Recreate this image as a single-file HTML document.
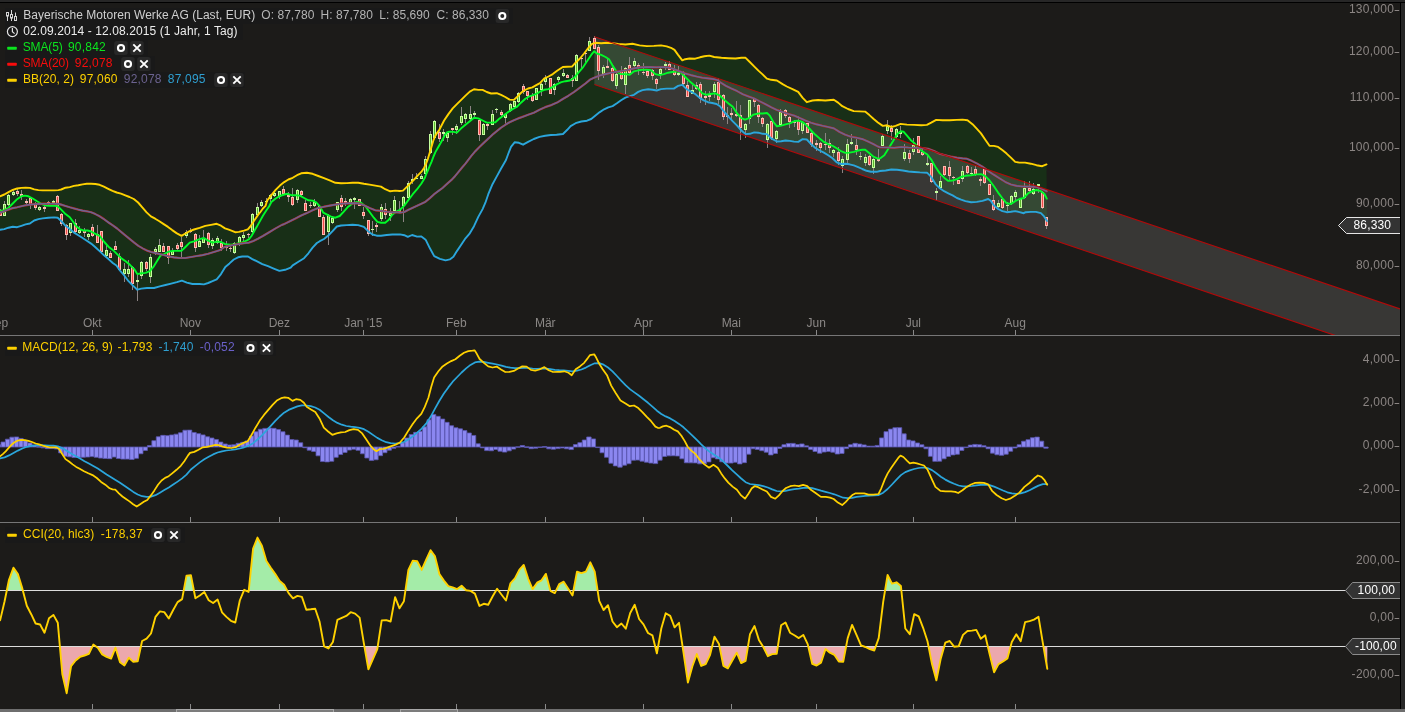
<!DOCTYPE html>
<html lang="de"><head><meta charset="utf-8"><title>Bayerische Motoren Werke AG Chart</title>
<style>
html,body{margin:0;padding:0;background:#1c1b19;}
body{width:1405px;height:712px;overflow:hidden;position:relative;font-family:"Liberation Sans",Arial,sans-serif;font-size:12px;}
.abs{position:absolute;}
#chart{position:absolute;left:0;top:0;}
.mon{position:absolute;top:315px;width:60px;text-align:center;color:#8b8886;font-size:12px;line-height:16px;white-space:nowrap;}
.yl{position:absolute;right:10.8px;letter-spacing:0.27px;width:80px;text-align:right;color:#8b8583;font-size:12px;line-height:16px;white-space:nowrap;}
.tagt{position:absolute;letter-spacing:0.15px;color:#fff;font-size:12px;line-height:16px;white-space:nowrap;}
.lt{position:absolute;font-size:12px;line-height:16px;white-space:nowrap;margin-top:-1px;letter-spacing:0.04px;}
#txt{position:absolute;left:0;top:0;width:1405px;height:712px;will-change:transform;}
#topbar{position:absolute;left:0;top:0;width:1405px;height:2px;background:#272727;}
#topline{position:absolute;left:0;top:2px;width:1405px;height:1px;background:#000;}
#rightline{position:absolute;left:1400px;top:2px;width:1px;height:707px;background:#000;}
#rightbar{position:absolute;left:1401px;top:0;width:4px;height:712px;background:#272727;}
#botbar{position:absolute;left:0;top:709px;width:1405px;height:3px;background:#6e6e6e;}
.sb{position:absolute;top:709px;height:3px;box-sizing:border-box;border:1px solid #a8a8a8;border-bottom:none;background:#7c7c7c;}
</style></head><body>
<svg id="chart" width="1405" height="712" viewBox="0 0 1405 712">
<defs><clipPath id="cm"><rect x="0" y="3" width="1400" height="332"/></clipPath></defs>
<g clip-path="url(#cm)">
<path d="M0.0 196.3 L4.3 194.5 L8.5 192.1 L12.8 189.9 L17.1 188.5 L21.4 187.9 L25.6 187.8 L29.9 187.9 L34.2 189.4 L38.4 190.1 L42.7 190.4 L48.4 190.4 L54.1 190.4 L58.4 190.1 L61.2 189.5 L65.5 187.7 L69.8 187.1 L74.0 185.9 L78.3 185.2 L82.6 184.4 L86.8 183.8 L91.1 183.7 L95.4 184.0 L99.6 184.8 L103.9 186.7 L108.2 188.8 L112.5 190.9 L116.7 192.5 L121.0 193.6 L125.3 195.3 L129.5 197.0 L133.8 199.0 L138.1 202.5 L142.3 207.3 L146.6 212.4 L150.9 216.4 L155.2 218.7 L159.4 221.2 L163.7 224.1 L168.0 226.9 L172.2 230.1 L176.5 233.1 L181.5 235.9 L185.4 233.5 L189.7 231.1 L194.0 229.5 L199.6 227.8 L205.3 225.9 L211.0 224.9 L216.7 223.8 L221.0 225.7 L225.0 228.4 L228.8 229.7 L232.0 230.9 L235.1 232.2 L238.9 231.9 L244.0 230.6 L247.8 229.3 L250.3 226.5 L252.8 222.7 L255.3 218.9 L257.9 215.1 L260.4 212.0 L262.9 208.5 L265.5 205.9 L267.1 200.6 L271.4 195.2 L275.6 189.9 L279.9 185.6 L284.2 182.1 L288.4 179.5 L292.7 177.8 L297.0 175.2 L301.2 173.3 L306.9 172.8 L312.6 173.8 L318.3 176.0 L324.0 178.1 L329.7 180.4 L335.4 182.8 L341.1 183.2 L346.8 183.1 L352.5 182.8 L358.2 182.8 L363.9 183.8 L369.6 184.6 L375.3 185.6 L381.0 186.6 L385.2 189.2 L390.2 191.3 L395.2 190.6 L399.5 191.0 L403.0 190.6 L406.6 187.1 L410.9 182.8 L415.1 178.5 L418.3 174.9 L421.5 171.7 L424.0 167.9 L425.9 164.1 L427.8 159.1 L429.7 152.8 L431.6 146.4 L433.5 140.1 L435.4 135.7 L437.3 132.5 L439.2 130.0 L444.1 120.5 L448.4 114.1 L452.7 108.4 L456.9 104.1 L461.2 99.9 L465.5 95.6 L469.8 91.6 L474.0 89.2 L478.3 89.9 L482.6 89.9 L486.8 92.0 L491.1 93.5 L496.8 93.2 L501.1 94.9 L505.3 97.0 L509.6 99.6 L513.9 99.9 L516.7 97.3 L520.3 93.5 L523.8 90.6 L528.1 88.5 L532.4 87.3 L536.7 84.9 L540.0 83.1 L544.3 78.4 L548.5 76.5 L552.8 74.1 L557.1 70.8 L562.8 67.0 L567.0 66.7 L572.0 66.6 L575.6 62.7 L579.9 58.5 L584.1 53.5 L588.4 47.8 L592.0 43.8 L595.5 42.8 L601.2 43.2 L606.9 42.8 L612.6 43.1 L618.3 43.9 L625.4 44.5 L632.5 43.8 L639.6 45.4 L646.8 46.1 L653.9 45.9 L661.0 45.4 L666.7 46.4 L671.0 47.8 L674.5 49.9 L678.1 54.9 L682.3 60.3 L685.2 59.2 L689.5 58.5 L695.2 58.7 L700.0 57.3 L704.3 56.3 L709.3 55.6 L714.2 57.0 L721.4 57.8 L728.5 58.2 L735.6 58.5 L741.3 57.8 L745.6 57.8 L749.8 62.0 L754.1 66.3 L758.4 70.6 L762.6 74.4 L766.9 78.7 L771.2 79.8 L776.9 80.5 L782.6 84.1 L786.8 86.5 L792.5 89.1 L798.2 91.9 L802.5 97.6 L806.8 102.2 L812.5 100.5 L818.1 100.0 L825.3 100.5 L833.8 99.8 L838.1 102.6 L842.3 106.2 L848.0 109.0 L853.7 111.1 L859.4 111.4 L865.1 111.6 L869.4 115.1 L873.7 119.0 L877.9 122.5 L882.8 125.9 L887.0 125.3 L891.3 127.0 L895.6 125.9 L900.6 123.9 L907.0 124.6 L914.1 124.9 L921.2 125.2 L926.9 124.9 L931.2 122.7 L936.2 119.9 L942.6 120.2 L949.7 120.3 L956.8 119.9 L962.5 119.6 L967.5 120.2 L972.5 124.2 L976.7 128.7 L981.0 133.4 L985.3 139.8 L989.5 145.8 L993.8 145.9 L998.1 146.9 L1002.3 150.1 L1006.6 153.6 L1010.9 157.6 L1015.2 161.9 L1019.4 162.6 L1025.1 162.6 L1030.8 163.7 L1036.5 165.2 L1042.2 166.2 L1046.5 164.4 L1047.0 221.0 L1044.1 216.4 L1040.9 213.2 L1035.9 211.9 L1030.8 211.9 L1025.7 212.2 L1023.8 213.2 L1019.5 212.2 L1015.2 211.1 L1011.0 211.8 L1006.7 212.2 L1002.4 211.1 L998.1 209.0 L993.9 205.4 L991.0 201.1 L988.2 199.0 L982.5 200.9 L976.8 201.9 L971.1 202.3 L965.4 201.1 L961.1 199.7 L956.9 198.0 L952.6 195.4 L948.3 193.3 L944.1 191.2 L939.8 188.3 L935.5 184.1 L931.2 176.9 L927.0 172.7 L919.9 172.4 L914.2 172.0 L908.5 171.5 L902.8 170.5 L897.1 169.8 L891.4 169.5 L885.7 170.5 L880.0 171.0 L876.6 171.8 L870.9 171.8 L866.6 170.8 L862.3 169.0 L858.1 167.1 L853.8 165.4 L849.5 164.3 L845.3 163.7 L841.0 164.0 L836.7 162.3 L832.5 158.3 L828.2 155.2 L823.9 152.6 L819.6 150.5 L815.4 148.0 L811.1 144.1 L806.8 139.5 L802.6 139.1 L798.3 141.9 L794.0 141.6 L789.8 140.9 L785.5 140.5 L781.2 141.2 L776.9 141.5 L771.2 138.4 L767.0 134.1 L762.7 133.8 L758.4 132.7 L754.2 132.4 L749.9 133.8 L745.6 134.1 L741.4 130.5 L737.1 125.6 L732.8 121.3 L728.5 116.7 L724.3 112.0 L720.0 106.3 L716.5 104.0 L712.2 103.0 L708.0 102.2 L703.7 100.4 L699.4 97.6 L695.2 94.0 L690.9 91.6 L686.6 89.1 L682.3 84.8 L678.1 85.9 L673.8 88.6 L666.7 88.6 L661.0 89.1 L656.7 90.5 L652.5 89.8 L648.2 89.3 L642.5 90.1 L638.2 91.9 L634.0 94.8 L629.7 96.2 L625.4 97.6 L621.1 100.2 L616.9 103.3 L612.6 106.1 L608.3 107.3 L604.1 109.3 L599.8 112.1 L595.5 115.4 L591.2 119.0 L587.0 120.7 L581.3 121.5 L575.6 123.2 L570.6 126.1 L567.3 129.8 L563.0 134.0 L556.6 134.7 L550.9 135.0 L545.2 135.7 L539.5 136.9 L533.8 139.0 L528.1 141.9 L523.1 144.7 L518.9 142.8 L514.6 142.3 L511.0 146.8 L508.2 154.0 L506.0 160.0 L501.1 168.5 L496.8 176.4 L492.5 184.2 L488.3 194.2 L485.4 202.7 L482.6 209.1 L478.3 216.9 L474.0 226.2 L469.8 233.3 L465.5 238.3 L461.2 244.7 L456.9 251.1 L453.4 256.8 L449.8 259.4 L445.6 260.4 L439.9 258.9 L434.2 256.1 L429.9 248.3 L425.6 239.7 L421.4 236.4 L417.1 236.6 L412.1 235.0 L407.8 236.9 L404.3 235.2 L400.0 234.4 L398.0 234.5 L392.3 234.5 L386.7 235.0 L381.0 235.7 L376.7 235.7 L372.4 234.5 L368.1 231.2 L363.9 226.9 L358.2 225.1 L352.5 224.8 L346.8 225.1 L341.1 225.5 L336.8 226.5 L332.6 231.2 L328.3 235.5 L324.0 239.0 L319.8 241.2 L316.9 243.0 L312.6 247.6 L308.4 253.3 L304.1 258.2 L298.4 261.8 L292.7 265.4 L290.7 267.7 L285.1 269.8 L279.4 270.9 L273.7 268.6 L268.0 266.2 L262.3 264.1 L256.6 261.2 L252.3 259.1 L248.0 256.5 L242.3 256.5 L238.1 257.3 L233.8 259.5 L229.5 263.4 L225.3 266.9 L221.0 274.1 L216.7 279.3 L212.5 281.2 L208.2 283.0 L203.9 284.4 L199.6 284.0 L192.5 284.0 L186.8 282.6 L181.9 280.7 L176.9 282.2 L171.2 283.6 L165.5 285.0 L159.8 286.4 L154.1 288.0 L147.0 288.0 L141.3 288.6 L137.3 289.7 L132.7 285.4 L128.5 281.2 L124.2 275.5 L119.9 270.5 L116.4 265.5 L112.8 263.0 L108.5 259.1 L104.3 255.6 L99.6 251.1 L95.4 247.2 L91.1 243.6 L86.8 240.7 L82.6 238.0 L78.3 235.2 L74.0 232.6 L69.8 229.1 L65.5 225.8 L61.2 221.0 L57.7 217.8 L54.1 217.4 L48.4 217.7 L42.7 218.4 L38.4 219.1 L34.2 220.5 L29.9 223.5 L25.6 224.4 L21.4 225.8 L17.1 227.2 L12.8 226.7 L8.5 227.7 L4.3 229.1 L0.0 229.8 Z" fill="#182f17"/>
<path d="M594.4 36.7 L1400 308.9 L1400 357.4 L594.4 84.5 Z" fill="rgba(255,255,255,0.125)"/>
<path d="M0.5 209 V216M4.5 201 V216M8.5 194 V206M13.5 189 V196M17.5 189 V196M21.5 190 V200M26.5 199 V204M30.5 198 V209M35.5 202 V210M39.5 206 V211M44.5 206 V212M48.5 201 V206M53.5 200 V203M57.5 195 V211M61.5 213 V226M66.5 224 V240M70.5 223 V236M75.5 219 V233M79.5 226 V234M84.5 228 V237M88.5 233 V240M92.5 224 V237M97.5 225 V243M101.5 231 V253M106.5 245 V257M110.5 251 V258M115.5 241 V250M119.5 253 V271M124.5 263 V282M128.5 260 V277M132.5 266 V290M137.5 273 V301M141.5 261 V279M146.5 261 V271M150.5 254 V283M155.5 247 V255M159.5 239 V252M163.5 243 V252M168.5 246 V264M172.5 248 V255M177.5 243 V250M181.5 237 V257M186.5 230 V238M190.5 228 V233M195.5 233 V252M199.5 235 V247M203.5 230 V243M208.5 232 V248M212.5 238 V249M217.5 236 V244M221.5 239 V251M226.5 241 V251M230.5 244 V252M234.5 242 V254M239.5 236 V246M243.5 232 V241M248.5 233 V238M252.5 213 V233M257.5 203 V216M261.5 200 V207M266.5 198 V202M270.5 194 V202M274.5 191 V197M279.5 191 V199M283.5 186 V194M288.5 192 V202M292.5 188 V206M297.5 189 V203M301.5 190 V196M305.5 200 V211M310.5 202 V208M314.5 199 V207M319.5 205 V217M323.5 215 V235M328.5 214 V245M332.5 216 V224M337.5 202 V212M341.5 195 V211M345.5 198 V206M350.5 198 V203M354.5 197 V209M359.5 199 V206M363.5 207 V219M368.5 220 V236M372.5 221 V236M376.5 223 V232M381.5 204 V221M385.5 203 V219M390.5 208 V221M394.5 196 V211M399.5 201 V212M403.5 196 V222M408.5 181 V199M412.5 174 V184M416.5 173 V179M421.5 174 V179M425.5 156 V174M430.5 131 V154M434.5 120 V138M439.5 124 V142M443.5 129 V141M447.5 132 V142M452.5 128 V135M456.5 124 V134M461.5 107 V125M465.5 113 V123M470.5 106 V120M474.5 111 V117M479.5 120 V141M483.5 123 V135M487.5 123 V130M492.5 110 V125M496.5 108 V113M501.5 110 V116M505.5 113 V125M510.5 103 V112M514.5 101 V108M518.5 92 V103M523.5 84 V94M527.5 91 V100M532.5 93 V102M536.5 88 V100M541.5 83 V96M545.5 75 V85M550.5 78 V94M554.5 83 V95M558.5 76 V82M563.5 69 V77M567.5 74 V78M572.5 75 V87M576.5 54 V81M581.5 56 V68M585.5 51 V63M589.5 37 V51M594.5 36 V49M598.5 45 V80M603.5 65 V78M607.5 58 V68M612.5 67 V82M616.5 73 V89M621.5 66 V80M625.5 67 V94M629.5 57 V74M634.5 58 V67M638.5 63 V75M643.5 63 V75M647.5 70 V78M652.5 69 V80M656.5 78 V89M660.5 68 V79M665.5 62 V70M669.5 61 V70M674.5 65 V76M678.5 66 V76M683.5 71 V85M687.5 81 V97M692.5 85 V94M696.5 82 V90M700.5 82 V103M705.5 91 V105M709.5 91 V101M714.5 82 V98M718.5 78 V104M723.5 94 V120M727.5 107 V124M731.5 108 V119M736.5 101 V117M740.5 105 V140M745.5 123 V138M749.5 100 V124M754.5 99 V107M758.5 104 V123M762.5 117 V127M767.5 123 V148M771.5 121 V140M776.5 130 V143M780.5 109 V126M785.5 109 V118M789.5 116 V128M794.5 120 V127M798.5 116 V135M802.5 121 V134M807.5 123 V133M811.5 132 V147M816.5 140 V151M820.5 142 V153M825.5 133 V150M829.5 139 V153M833.5 149 V157M838.5 147 V165M842.5 156 V173M847.5 139 V163M851.5 134 V145M856.5 139 V155M860.5 152 V160M865.5 154 V166M869.5 155 V166M873.5 158 V174M878.5 149 V162M882.5 134 V146M887.5 120 V134M891.5 125 V140M896.5 128 V139M900.5 126 V138M904.5 144 V161M909.5 150 V163M913.5 138 V155M918.5 136 V153M922.5 149 V156M927.5 156 V166M931.5 163 V183M936.5 188 V200M940.5 176 V188M944.5 166 V176M949.5 161 V180M953.5 176 V185M958.5 180 V184M962.5 166 V182M967.5 165 V174M971.5 167 V175M975.5 166 V176M980.5 177 V186M984.5 168 V184M989.5 184 V195M993.5 195 V211M998.5 200 V208M1002.5 198 V209M1007.5 202 V211M1011.5 195 V205M1015.5 190 V200M1020.5 198 V208M1024.5 181 V199M1029.5 181 V192M1033.5 183 V195M1038.5 184 V193M1042.5 191 V209M1046.5 217 V229" stroke="#8c8484" stroke-width="1" fill="none"/>
<path d="M3 204h3v12h-3zM7 195h3v10h-3zM12 192h3v3h-3zM38 207h3v3h-3zM52 201h3v2h-3zM69 223h3v10h-3zM78 230h3v3h-3zM87 234h3v3h-3zM105 250h3v6h-3zM123 269h3v5h-3zM127 269h3v5h-3zM136 280h3v2h-3zM140 262h3v14h-3zM149 257h3v20h-3zM154 249h3v3h-3zM158 245h3v7h-3zM171 251h3v4h-3zM185 232h3v4h-3zM198 241h3v6h-3zM202 238h3v5h-3zM211 240h3v6h-3zM216 238h3v5h-3zM233 243h3v10h-3zM238 237h3v6h-3zM242 235h3v3h-3zM251 214h3v18h-3zM256 207h3v8h-3zM260 202h3v4h-3zM265 201h3v1h-3zM269 195h3v4h-3zM273 193h3v3h-3zM278 191h3v6h-3zM296 190h3v10h-3zM313 202h3v4h-3zM327 215h3v17h-3zM331 218h3v5h-3zM336 202h3v8h-3zM349 199h3v4h-3zM353 198h3v2h-3zM371 229h3v1h-3zM380 207h3v12h-3zM389 213h3v3h-3zM393 200h3v11h-3zM402 197h3v9h-3zM407 183h3v15h-3zM411 179h3v2h-3zM415 178h3v1h-3zM420 176h3v3h-3zM424 159h3v15h-3zM429 134h3v19h-3zM433 121h3v17h-3zM442 132h3v2h-3zM446 133h3v5h-3zM455 126h3v4h-3zM460 116h3v7h-3zM464 114h3v5h-3zM469 114h3v5h-3zM473 113h3v2h-3zM482 124h3v11h-3zM491 114h3v11h-3zM495 109h3v1h-3zM504 114h3v4h-3zM509 104h3v7h-3zM513 101h3v6h-3zM517 93h3v9h-3zM535 88h3v12h-3zM540 84h3v6h-3zM544 78h3v4h-3zM553 84h3v6h-3zM557 77h3v3h-3zM562 73h3v3h-3zM575 55h3v26h-3zM588 41h3v10h-3zM602 67h3v7h-3zM615 74h3v12h-3zM624 68h3v17h-3zM633 61h3v5h-3zM659 69h3v5h-3zM664 64h3v2h-3zM677 73h3v2h-3zM691 90h3v4h-3zM713 84h3v8h-3zM744 124h3v6h-3zM748 100h3v19h-3zM766 124h3v16h-3zM775 131h3v8h-3zM779 112h3v13h-3zM801 122h3v9h-3zM832 150h3v3h-3zM841 159h3v7h-3zM846 144h3v16h-3zM850 142h3v2h-3zM859 156h3v1h-3zM864 157h3v6h-3zM872 159h3v9h-3zM881 136h3v10h-3zM886 126h3v5h-3zM895 129h3v8h-3zM899 131h3v3h-3zM903 152h3v7h-3zM912 145h3v7h-3zM926 163h3v2h-3zM935 191h3v2h-3zM939 181h3v7h-3zM961 171h3v8h-3zM970 173h3v1h-3zM997 203h3v4h-3zM1006 205h3v1h-3zM1010 196h3v8h-3zM1014 192h3v5h-3zM1019 199h3v9h-3zM1023 188h3v10h-3zM1032 189h3v5h-3zM1037 184h3v2h-3z" fill="#c6ff9e"/>
<path d="M4 205h1v10h-1zM8 196h1v8h-1zM13 193h1v1h-1zM39 208h1v1h-1zM70 224h1v8h-1zM79 231h1v1h-1zM88 235h1v1h-1zM106 251h1v4h-1zM124 270h1v3h-1zM128 270h1v3h-1zM141 263h1v12h-1zM150 258h1v18h-1zM155 250h1v1h-1zM159 246h1v5h-1zM172 252h1v2h-1zM186 233h1v2h-1zM199 242h1v4h-1zM203 239h1v3h-1zM212 241h1v4h-1zM217 239h1v3h-1zM234 244h1v8h-1zM239 238h1v4h-1zM243 236h1v1h-1zM252 215h1v16h-1zM257 208h1v6h-1zM261 203h1v2h-1zM270 196h1v2h-1zM274 194h1v1h-1zM279 192h1v4h-1zM297 191h1v8h-1zM314 203h1v2h-1zM328 216h1v15h-1zM332 219h1v3h-1zM337 203h1v6h-1zM350 200h1v2h-1zM381 208h1v10h-1zM390 214h1v1h-1zM394 201h1v9h-1zM403 198h1v7h-1zM408 184h1v13h-1zM421 177h1v1h-1zM425 160h1v13h-1zM430 135h1v17h-1zM434 122h1v15h-1zM447 134h1v3h-1zM456 127h1v2h-1zM461 117h1v5h-1zM465 115h1v3h-1zM470 115h1v3h-1zM483 125h1v9h-1zM492 115h1v9h-1zM505 115h1v2h-1zM510 105h1v5h-1zM514 102h1v4h-1zM518 94h1v7h-1zM536 89h1v10h-1zM541 85h1v4h-1zM545 79h1v2h-1zM554 85h1v4h-1zM558 78h1v1h-1zM563 74h1v1h-1zM576 56h1v24h-1zM589 42h1v8h-1zM603 68h1v5h-1zM616 75h1v10h-1zM625 69h1v15h-1zM634 62h1v3h-1zM660 70h1v3h-1zM692 91h1v2h-1zM714 85h1v6h-1zM745 125h1v4h-1zM749 101h1v17h-1zM767 125h1v14h-1zM776 132h1v6h-1zM780 113h1v11h-1zM802 123h1v7h-1zM833 151h1v1h-1zM842 160h1v5h-1zM847 145h1v14h-1zM865 158h1v4h-1zM873 160h1v7h-1zM882 137h1v8h-1zM887 127h1v3h-1zM896 130h1v6h-1zM900 132h1v1h-1zM904 153h1v5h-1zM913 146h1v5h-1zM940 182h1v5h-1zM962 172h1v6h-1zM998 204h1v2h-1zM1011 197h1v6h-1zM1015 193h1v3h-1zM1020 200h1v7h-1zM1024 189h1v8h-1zM1033 190h1v3h-1z" fill="#58b62c"/>
<path d="M-1 210h3v6h-3zM16 191h3v3h-3zM20 194h3v2h-3zM25 201h3v2h-3zM29 198h3v7h-3zM34 203h3v5h-3zM43 207h3v2h-3zM47 202h3v1h-3zM56 196h3v15h-3zM60 214h3v10h-3zM65 225h3v10h-3zM74 223h3v9h-3zM83 230h3v3h-3zM91 227h3v9h-3zM96 234h3v9h-3zM100 231h3v21h-3zM109 253h3v5h-3zM114 246h3v4h-3zM118 256h3v14h-3zM131 267h3v17h-3zM145 262h3v7h-3zM162 246h3v6h-3zM167 246h3v12h-3zM176 245h3v4h-3zM180 242h3v5h-3zM189 231h3v1h-3zM194 234h3v14h-3zM207 233h3v12h-3zM220 243h3v5h-3zM225 246h3v2h-3zM229 248h3v1h-3zM247 234h3v1h-3zM282 189h3v5h-3zM287 195h3v2h-3zM291 197h3v8h-3zM300 191h3v4h-3zM304 203h3v8h-3zM309 205h3v1h-3zM318 206h3v11h-3zM322 217h3v18h-3zM340 198h3v9h-3zM344 201h3v2h-3zM358 199h3v7h-3zM362 212h3v4h-3zM367 220h3v14h-3zM375 225h3v2h-3zM384 209h3v6h-3zM398 210h3v2h-3zM438 132h3v7h-3zM451 128h3v2h-3zM478 120h3v15h-3zM486 124h3v2h-3zM500 112h3v3h-3zM522 86h3v6h-3zM526 91h3v5h-3zM531 95h3v6h-3zM549 78h3v16h-3zM566 75h3v3h-3zM571 78h3v3h-3zM580 58h3v1h-3zM584 53h3v1h-3zM593 38h3v11h-3zM597 47h3v24h-3zM606 66h3v2h-3zM611 68h3v13h-3zM620 71h3v8h-3zM628 65h3v8h-3zM637 65h3v3h-3zM642 72h3v1h-3zM646 71h3v5h-3zM651 70h3v6h-3zM655 79h3v5h-3zM668 64h3v6h-3zM673 70h3v5h-3zM682 74h3v10h-3zM686 85h3v12h-3zM695 85h3v4h-3zM699 84h3v15h-3zM704 96h3v2h-3zM708 95h3v2h-3zM717 82h3v18h-3zM722 95h3v22h-3zM726 115h3v2h-3zM730 113h3v2h-3zM735 114h3v2h-3zM739 115h3v13h-3zM753 99h3v3h-3zM757 105h3v12h-3zM761 118h3v6h-3zM770 121h3v17h-3zM784 110h3v6h-3zM788 117h3v5h-3zM793 121h3v2h-3zM797 120h3v10h-3zM806 123h3v10h-3zM810 133h3v12h-3zM815 143h3v2h-3zM819 143h3v5h-3zM824 144h3v1h-3zM828 143h3v5h-3zM837 152h3v9h-3zM855 145h3v5h-3zM868 156h3v9h-3zM877 159h3v2h-3zM890 128h3v4h-3zM908 153h3v6h-3zM917 136h3v17h-3zM921 152h3v3h-3zM930 163h3v19h-3zM943 166h3v9h-3zM948 167h3v9h-3zM952 177h3v1h-3zM957 180h3v4h-3zM966 166h3v7h-3zM974 169h3v6h-3zM979 179h3v2h-3zM983 169h3v14h-3zM988 184h3v11h-3zM992 200h3v10h-3zM1001 199h3v9h-3zM1028 188h3v3h-3zM1041 192h3v16h-3zM1045 217h3v9h-3z" fill="#ffb9b0"/>
<path d="M0 211h1v4h-1zM17 192h1v1h-1zM30 199h1v5h-1zM35 204h1v3h-1zM57 197h1v13h-1zM61 215h1v8h-1zM66 226h1v8h-1zM75 224h1v7h-1zM84 231h1v1h-1zM92 228h1v7h-1zM97 235h1v7h-1zM101 232h1v19h-1zM110 254h1v3h-1zM115 247h1v2h-1zM119 257h1v12h-1zM132 268h1v15h-1zM146 263h1v5h-1zM163 247h1v4h-1zM168 247h1v10h-1zM177 246h1v2h-1zM181 243h1v3h-1zM195 235h1v12h-1zM208 234h1v10h-1zM221 244h1v3h-1zM283 190h1v3h-1zM292 198h1v6h-1zM301 192h1v2h-1zM305 204h1v6h-1zM319 207h1v9h-1zM323 218h1v16h-1zM341 199h1v7h-1zM359 200h1v5h-1zM363 213h1v2h-1zM368 221h1v12h-1zM385 210h1v4h-1zM439 133h1v5h-1zM479 121h1v13h-1zM501 113h1v1h-1zM523 87h1v4h-1zM527 92h1v3h-1zM532 96h1v4h-1zM550 79h1v14h-1zM567 76h1v1h-1zM572 79h1v1h-1zM594 39h1v9h-1zM598 48h1v22h-1zM612 69h1v11h-1zM621 72h1v6h-1zM629 66h1v6h-1zM638 66h1v1h-1zM647 72h1v3h-1zM652 71h1v4h-1zM656 80h1v3h-1zM669 65h1v4h-1zM674 71h1v3h-1zM683 75h1v8h-1zM687 86h1v10h-1zM696 86h1v2h-1zM700 85h1v13h-1zM718 83h1v16h-1zM723 96h1v20h-1zM740 116h1v11h-1zM754 100h1v1h-1zM758 106h1v10h-1zM762 119h1v4h-1zM771 122h1v15h-1zM785 111h1v4h-1zM789 118h1v3h-1zM798 121h1v8h-1zM807 124h1v8h-1zM811 134h1v10h-1zM820 144h1v3h-1zM829 144h1v3h-1zM838 153h1v7h-1zM856 146h1v3h-1zM869 157h1v7h-1zM891 129h1v2h-1zM909 154h1v4h-1zM918 137h1v15h-1zM922 153h1v1h-1zM931 164h1v17h-1zM944 167h1v7h-1zM949 168h1v7h-1zM958 181h1v2h-1zM967 167h1v5h-1zM975 170h1v4h-1zM984 170h1v12h-1zM989 185h1v9h-1zM993 201h1v8h-1zM1002 200h1v7h-1zM1029 189h1v1h-1zM1042 193h1v14h-1zM1046 218h1v7h-1z" fill="#f04a4a"/>
<path d="M0.0 211.0 L4.3 210.1 L8.5 207.7 L12.8 203.5 L17.1 199.2 L21.4 196.3 L24.9 195.6 L28.5 196.3 L32.7 198.5 L37.0 201.3 L41.3 203.9 L45.6 205.6 L49.8 205.9 L54.1 205.6 L57.7 206.3 L61.2 209.6 L65.5 214.1 L69.8 217.3 L73.3 222.0 L76.2 226.2 L79.7 229.1 L83.3 230.5 L87.5 230.5 L91.1 231.5 L95.4 233.8 L99.6 235.8 L104.3 242.0 L108.5 246.7 L112.8 249.9 L117.1 254.1 L121.4 258.4 L125.6 261.2 L129.9 264.8 L134.2 269.1 L137.3 274.1 L141.3 273.3 L145.6 272.9 L149.8 271.2 L153.4 266.9 L156.9 261.2 L160.5 255.6 L164.1 254.1 L168.3 251.7 L172.6 250.9 L176.9 250.9 L181.4 250.9 L185.4 247.0 L189.7 242.7 L194.0 241.3 L199.6 239.2 L203.9 238.0 L208.2 240.6 L212.5 242.7 L216.7 241.6 L221.0 242.0 L225.3 244.2 L231.0 244.6 L235.2 244.2 L239.5 243.0 L242.1 242.3 L245.9 241.0 L249.0 239.1 L251.5 236.0 L253.4 232.8 L254.7 230.3 L256.6 227.1 L259.8 221.4 L262.9 215.7 L266.1 210.7 L269.2 206.3 L271.4 202.0 L275.6 198.5 L279.9 196.0 L284.2 194.5 L287.7 193.8 L291.3 195.2 L295.6 195.2 L299.8 195.6 L304.1 198.0 L308.4 200.3 L312.6 200.6 L316.2 202.3 L319.8 206.3 L323.3 212.7 L327.6 214.8 L331.9 217.0 L335.4 217.7 L339.7 216.0 L344.0 211.3 L348.2 206.7 L352.5 203.4 L356.8 202.0 L361.0 202.7 L365.3 206.3 L369.6 212.0 L373.8 217.7 L377.4 221.9 L381.0 222.7 L385.2 222.7 L388.8 219.8 L392.3 214.8 L396.6 211.3 L400.0 209.8 L404.3 205.6 L408.5 199.9 L412.8 194.2 L417.1 189.2 L421.4 183.5 L424.9 177.8 L425.9 174.9 L427.8 170.5 L429.7 166.0 L431.6 161.6 L433.5 156.5 L435.4 152.1 L437.9 147.7 L440.5 143.3 L443.0 138.8 L444.9 135.1 L446.8 132.5 L449.3 131.6 L453.4 131.9 L456.9 132.6 L461.2 128.3 L465.5 124.8 L469.8 121.2 L474.0 117.7 L478.3 118.4 L482.6 120.5 L486.8 122.6 L491.1 122.6 L495.4 122.3 L499.6 118.4 L503.9 115.2 L508.2 112.0 L512.5 109.1 L516.7 107.0 L521.0 102.7 L525.3 98.7 L529.5 96.3 L533.8 94.9 L538.1 93.0 L540.0 91.6 L544.3 89.8 L548.5 89.1 L552.8 86.9 L557.1 84.1 L561.4 82.2 L565.6 81.2 L569.9 80.5 L574.2 77.7 L578.4 72.7 L582.7 67.7 L587.0 61.3 L591.2 54.9 L594.1 51.3 L596.9 53.5 L601.2 54.9 L605.5 57.0 L609.0 59.2 L612.6 65.6 L616.9 72.0 L621.1 74.1 L625.4 74.1 L629.7 74.8 L634.0 71.3 L638.2 70.3 L642.5 69.8 L646.8 69.8 L651.0 70.3 L655.3 74.1 L659.6 75.1 L663.8 74.1 L668.1 72.7 L672.4 72.0 L676.7 71.3 L680.9 72.7 L685.2 77.0 L689.5 81.2 L693.7 84.8 L698.0 88.3 L702.3 93.3 L706.5 94.8 L710.8 94.0 L715.1 93.3 L720.0 95.7 L724.3 99.9 L728.5 103.5 L732.8 106.8 L737.1 113.5 L741.4 118.1 L744.9 119.6 L749.2 118.1 L753.5 114.6 L758.4 113.5 L762.7 113.5 L767.0 113.0 L769.8 115.6 L773.4 122.0 L776.9 126.3 L781.2 125.6 L785.5 124.4 L789.8 123.4 L794.0 121.3 L798.3 120.6 L802.6 122.0 L806.8 125.6 L811.1 130.5 L815.4 134.8 L819.6 138.4 L823.9 141.9 L828.2 144.1 L832.5 145.8 L836.7 148.3 L841.0 151.2 L845.3 152.9 L849.5 152.6 L853.8 151.9 L858.1 150.5 L862.3 149.8 L865.2 149.8 L869.5 153.3 L873.7 156.9 L878.0 158.6 L880.0 158.4 L884.3 155.3 L888.5 148.5 L892.8 141.4 L897.1 134.2 L900.6 131.1 L903.5 131.7 L907.0 135.7 L910.6 139.9 L914.9 143.5 L918.4 147.8 L922.7 151.6 L927.0 154.2 L931.2 159.6 L935.5 167.0 L939.8 173.4 L944.1 177.7 L948.3 180.9 L952.6 180.5 L956.9 179.1 L961.1 176.9 L965.4 175.8 L971.1 175.2 L976.8 174.4 L981.1 174.1 L985.3 176.2 L989.6 180.5 L993.9 186.2 L998.1 192.6 L1002.4 198.3 L1006.7 203.3 L1011.0 204.0 L1015.2 201.1 L1019.5 199.0 L1023.8 198.0 L1028.0 193.3 L1032.3 191.2 L1036.6 190.0 L1040.9 191.2 L1044.4 194.0 L1046.8 198.6" stroke="#00fa28" stroke-width="1.9" fill="none" stroke-linejoin="round" stroke-linecap="round"/>
<path d="M0.0 212.7 L4.3 211.3 L8.5 209.6 L12.8 208.1 L17.1 207.3 L21.4 206.3 L25.6 205.3 L29.9 204.6 L34.2 204.2 L38.4 203.9 L42.7 203.7 L48.4 203.7 L54.1 203.7 L58.4 203.9 L61.2 204.6 L65.5 206.0 L69.8 207.3 L74.0 208.4 L78.3 209.6 L82.6 210.6 L86.8 211.3 L91.1 212.3 L95.4 214.1 L99.6 216.3 L104.3 219.3 L108.5 222.5 L112.8 225.4 L117.1 228.5 L121.4 232.1 L125.6 235.6 L129.9 239.2 L134.2 242.7 L138.4 245.9 L142.7 248.4 L147.0 250.6 L151.2 252.0 L156.9 253.4 L162.6 254.8 L168.3 256.3 L174.0 257.4 L179.7 258.0 L185.4 258.0 L191.1 257.0 L196.8 256.0 L202.5 255.1 L208.2 253.8 L213.9 252.0 L219.6 250.3 L225.0 246.7 L231.3 245.5 L237.6 244.2 L244.0 243.2 L249.0 242.6 L253.4 241.0 L257.9 238.8 L262.9 236.0 L269.2 232.2 L275.6 228.4 L281.9 224.9 L284.2 224.1 L289.9 221.2 L295.6 218.4 L301.2 215.5 L306.9 213.1 L312.6 210.3 L318.3 208.0 L324.0 206.7 L329.7 205.6 L335.4 204.6 L341.1 203.7 L346.8 203.4 L352.5 203.1 L358.2 203.4 L363.9 205.3 L369.6 208.0 L375.3 210.3 L381.0 210.8 L386.7 211.7 L392.3 212.3 L398.0 212.4 L400.0 212.7 L404.3 212.0 L408.5 209.8 L412.8 207.7 L417.1 205.8 L421.4 203.8 L425.6 201.7 L429.9 198.1 L434.2 194.2 L438.4 191.0 L442.7 187.8 L447.0 183.9 L451.2 180.2 L454.8 176.4 L458.4 172.1 L461.9 167.8 L465.5 163.6 L471.2 156.1 L475.4 151.1 L479.7 146.8 L484.0 142.6 L488.3 138.6 L492.5 134.7 L496.8 131.2 L501.1 127.6 L505.3 124.8 L509.6 122.2 L513.9 120.2 L518.1 118.4 L522.4 116.9 L528.1 114.8 L533.8 112.7 L539.5 109.8 L545.7 106.9 L551.4 105.1 L557.1 102.6 L562.8 99.0 L568.5 95.7 L574.2 91.9 L579.9 87.6 L585.6 83.4 L589.8 79.8 L594.1 77.7 L599.8 75.5 L605.5 74.1 L611.2 72.7 L616.9 71.7 L622.6 70.8 L628.3 69.8 L634.0 68.4 L639.6 67.4 L645.3 67.0 L651.0 67.1 L656.7 67.3 L662.4 67.0 L668.1 67.4 L673.8 69.1 L679.5 71.3 L685.2 73.4 L690.9 75.1 L696.6 76.5 L702.3 77.7 L708.0 78.4 L713.7 79.1 L717.9 80.2 L720.0 82.1 L725.7 85.7 L731.4 88.5 L737.1 91.1 L742.8 94.2 L748.5 96.4 L754.2 98.5 L759.9 101.4 L765.6 104.2 L771.2 107.3 L776.9 109.9 L782.6 112.0 L788.3 113.9 L794.0 115.6 L799.7 118.1 L805.4 120.6 L811.1 122.7 L816.8 124.4 L822.5 125.8 L828.2 127.0 L833.9 128.4 L839.6 132.0 L845.3 134.8 L851.0 136.7 L856.7 137.7 L862.3 139.1 L868.0 141.5 L873.7 144.3 L878.0 146.6 L880.0 147.3 L887.1 147.5 L894.2 147.8 L901.4 147.0 L908.5 147.5 L915.6 147.8 L922.7 148.2 L928.4 148.9 L934.1 151.0 L939.8 153.9 L945.5 155.3 L951.2 156.7 L956.9 157.7 L962.6 158.4 L966.8 158.7 L971.1 160.6 L976.8 163.4 L982.5 166.7 L988.2 171.0 L993.9 174.8 L999.6 178.4 L1005.3 181.9 L1011.0 184.5 L1016.7 185.9 L1022.3 186.5 L1029.5 186.6 L1036.6 186.9 L1042.3 189.0 L1046.8 191.2" stroke="#c01c1c" stroke-width="2.2" fill="none" stroke-linejoin="round" stroke-linecap="round"/>
<path d="M0.0 212.7 L4.3 211.3 L8.5 209.6 L12.8 208.1 L17.1 207.3 L21.4 206.3 L25.6 205.3 L29.9 204.6 L34.2 204.2 L38.4 203.9 L42.7 203.7 L48.4 203.7 L54.1 203.7 L58.4 203.9 L61.2 204.6 L65.5 206.0 L69.8 207.3 L74.0 208.4 L78.3 209.6 L82.6 210.6 L86.8 211.3 L91.1 212.3 L95.4 214.1 L99.6 216.3 L104.3 219.3 L108.5 222.5 L112.8 225.4 L117.1 228.5 L121.4 232.1 L125.6 235.6 L129.9 239.2 L134.2 242.7 L138.4 245.9 L142.7 248.4 L147.0 250.6 L151.2 252.0 L156.9 253.4 L162.6 254.8 L168.3 256.3 L174.0 257.4 L179.7 258.0 L185.4 258.0 L191.1 257.0 L196.8 256.0 L202.5 255.1 L208.2 253.8 L213.9 252.0 L219.6 250.3 L225.0 246.7 L231.3 245.5 L237.6 244.2 L244.0 243.2 L249.0 242.6 L253.4 241.0 L257.9 238.8 L262.9 236.0 L269.2 232.2 L275.6 228.4 L281.9 224.9 L284.2 224.1 L289.9 221.2 L295.6 218.4 L301.2 215.5 L306.9 213.1 L312.6 210.3 L318.3 208.0 L324.0 206.7 L329.7 205.6 L335.4 204.6 L341.1 203.7 L346.8 203.4 L352.5 203.1 L358.2 203.4 L363.9 205.3 L369.6 208.0 L375.3 210.3 L381.0 210.8 L386.7 211.7 L392.3 212.3 L398.0 212.4 L400.0 212.7 L404.3 212.0 L408.5 209.8 L412.8 207.7 L417.1 205.8 L421.4 203.8 L425.6 201.7 L429.9 198.1 L434.2 194.2 L438.4 191.0 L442.7 187.8 L447.0 183.9 L451.2 180.2 L454.8 176.4 L458.4 172.1 L461.9 167.8 L465.5 163.6 L471.2 156.1 L475.4 151.1 L479.7 146.8 L484.0 142.6 L488.3 138.6 L492.5 134.7 L496.8 131.2 L501.1 127.6 L505.3 124.8 L509.6 122.2 L513.9 120.2 L518.1 118.4 L522.4 116.9 L528.1 114.8 L533.8 112.7 L539.5 109.8 L545.7 106.9 L551.4 105.1 L557.1 102.6 L562.8 99.0 L568.5 95.7 L574.2 91.9 L579.9 87.6 L585.6 83.4 L589.8 79.8 L594.1 77.7 L599.8 75.5 L605.5 74.1 L611.2 72.7 L616.9 71.7 L622.6 70.8 L628.3 69.8 L634.0 68.4 L639.6 67.4 L645.3 67.0 L651.0 67.1 L656.7 67.3 L662.4 67.0 L668.1 67.4 L673.8 69.1 L679.5 71.3 L685.2 73.4 L690.9 75.1 L696.6 76.5 L702.3 77.7 L708.0 78.4 L713.7 79.1 L717.9 80.2 L720.0 82.1 L725.7 85.7 L731.4 88.5 L737.1 91.1 L742.8 94.2 L748.5 96.4 L754.2 98.5 L759.9 101.4 L765.6 104.2 L771.2 107.3 L776.9 109.9 L782.6 112.0 L788.3 113.9 L794.0 115.6 L799.7 118.1 L805.4 120.6 L811.1 122.7 L816.8 124.4 L822.5 125.8 L828.2 127.0 L833.9 128.4 L839.6 132.0 L845.3 134.8 L851.0 136.7 L856.7 137.7 L862.3 139.1 L868.0 141.5 L873.7 144.3 L878.0 146.6 L880.0 147.3 L887.1 147.5 L894.2 147.8 L901.4 147.0 L908.5 147.5 L915.6 147.8 L922.7 148.2 L928.4 148.9 L934.1 151.0 L939.8 153.9 L945.5 155.3 L951.2 156.7 L956.9 157.7 L962.6 158.4 L966.8 158.7 L971.1 160.6 L976.8 163.4 L982.5 166.7 L988.2 171.0 L993.9 174.8 L999.6 178.4 L1005.3 181.9 L1011.0 184.5 L1016.7 185.9 L1022.3 186.5 L1029.5 186.6 L1036.6 186.9 L1042.3 189.0 L1046.8 191.2" stroke="#6c6390" stroke-width="1.6" fill="none" stroke-linejoin="round" stroke-linecap="round"/>
<path d="M0.0 229.8 L4.3 229.1 L8.5 227.7 L12.8 226.7 L17.1 227.2 L21.4 225.8 L25.6 224.4 L29.9 223.5 L34.2 220.5 L38.4 219.1 L42.7 218.4 L48.4 217.7 L54.1 217.4 L57.7 217.8 L61.2 221.0 L65.5 225.8 L69.8 229.1 L74.0 232.6 L78.3 235.2 L82.6 238.0 L86.8 240.7 L91.1 243.6 L95.4 247.2 L99.6 251.1 L104.3 255.6 L108.5 259.1 L112.8 263.0 L116.4 265.5 L119.9 270.5 L124.2 275.5 L128.5 281.2 L132.7 285.4 L137.3 289.7 L141.3 288.6 L147.0 288.0 L154.1 288.0 L159.8 286.4 L165.5 285.0 L171.2 283.6 L176.9 282.2 L181.9 280.7 L186.8 282.6 L192.5 284.0 L199.6 284.0 L203.9 284.4 L208.2 283.0 L212.5 281.2 L216.7 279.3 L221.0 274.1 L225.3 266.9 L229.5 263.4 L233.8 259.5 L238.1 257.3 L242.3 256.5 L248.0 256.5 L252.3 259.1 L256.6 261.2 L262.3 264.1 L268.0 266.2 L273.7 268.6 L279.4 270.9 L285.1 269.8 L290.7 267.7 L292.7 265.4 L298.4 261.8 L304.1 258.2 L308.4 253.3 L312.6 247.6 L316.9 243.0 L319.8 241.2 L324.0 239.0 L328.3 235.5 L332.6 231.2 L336.8 226.5 L341.1 225.5 L346.8 225.1 L352.5 224.8 L358.2 225.1 L363.9 226.9 L368.1 231.2 L372.4 234.5 L376.7 235.7 L381.0 235.7 L386.7 235.0 L392.3 234.5 L398.0 234.5 L400.0 234.4 L404.3 235.2 L407.8 236.9 L412.1 235.0 L417.1 236.6 L421.4 236.4 L425.6 239.7 L429.9 248.3 L434.2 256.1 L439.9 258.9 L445.6 260.4 L449.8 259.4 L453.4 256.8 L456.9 251.1 L461.2 244.7 L465.5 238.3 L469.8 233.3 L474.0 226.2 L478.3 216.9 L482.6 209.1 L485.4 202.7 L488.3 194.2 L492.5 184.2 L496.8 176.4 L501.1 168.5 L506.0 160.0 L508.2 154.0 L511.0 146.8 L514.6 142.3 L518.9 142.8 L523.1 144.7 L528.1 141.9 L533.8 139.0 L539.5 136.9 L545.2 135.7 L550.9 135.0 L556.6 134.7 L563.0 134.0 L567.3 129.8 L570.6 126.1 L575.6 123.2 L581.3 121.5 L587.0 120.7 L591.2 119.0 L595.5 115.4 L599.8 112.1 L604.1 109.3 L608.3 107.3 L612.6 106.1 L616.9 103.3 L621.1 100.2 L625.4 97.6 L629.7 96.2 L634.0 94.8 L638.2 91.9 L642.5 90.1 L648.2 89.3 L652.5 89.8 L656.7 90.5 L661.0 89.1 L666.7 88.6 L673.8 88.6 L678.1 85.9 L682.3 84.8 L686.6 89.1 L690.9 91.6 L695.2 94.0 L699.4 97.6 L703.7 100.4 L708.0 102.2 L712.2 103.0 L716.5 104.0 L720.0 106.3 L724.3 112.0 L728.5 116.7 L732.8 121.3 L737.1 125.6 L741.4 130.5 L745.6 134.1 L749.9 133.8 L754.2 132.4 L758.4 132.7 L762.7 133.8 L767.0 134.1 L771.2 138.4 L776.9 141.5 L781.2 141.2 L785.5 140.5 L789.8 140.9 L794.0 141.6 L798.3 141.9 L802.6 139.1 L806.8 139.5 L811.1 144.1 L815.4 148.0 L819.6 150.5 L823.9 152.6 L828.2 155.2 L832.5 158.3 L836.7 162.3 L841.0 164.0 L845.3 163.7 L849.5 164.3 L853.8 165.4 L858.1 167.1 L862.3 169.0 L866.6 170.8 L870.9 171.8 L876.6 171.8 L880.0 171.0 L885.7 170.5 L891.4 169.5 L897.1 169.8 L902.8 170.5 L908.5 171.5 L914.2 172.0 L919.9 172.4 L927.0 172.7 L931.2 176.9 L935.5 184.1 L939.8 188.3 L944.1 191.2 L948.3 193.3 L952.6 195.4 L956.9 198.0 L961.1 199.7 L965.4 201.1 L971.1 202.3 L976.8 201.9 L982.5 200.9 L988.2 199.0 L991.0 201.1 L993.9 205.4 L998.1 209.0 L1002.4 211.1 L1006.7 212.2 L1011.0 211.8 L1015.2 211.1 L1019.5 212.2 L1023.8 213.2 L1025.7 212.2 L1030.8 211.9 L1035.9 211.9 L1040.9 213.2 L1044.1 216.4 L1047.0 221.0" stroke="#2ba6dc" stroke-width="1.9" fill="none" stroke-linejoin="round" stroke-linecap="round"/>
<path d="M0.0 196.3 L4.3 194.5 L8.5 192.1 L12.8 189.9 L17.1 188.5 L21.4 187.9 L25.6 187.8 L29.9 187.9 L34.2 189.4 L38.4 190.1 L42.7 190.4 L48.4 190.4 L54.1 190.4 L58.4 190.1 L61.2 189.5 L65.5 187.7 L69.8 187.1 L74.0 185.9 L78.3 185.2 L82.6 184.4 L86.8 183.8 L91.1 183.7 L95.4 184.0 L99.6 184.8 L103.9 186.7 L108.2 188.8 L112.5 190.9 L116.7 192.5 L121.0 193.6 L125.3 195.3 L129.5 197.0 L133.8 199.0 L138.1 202.5 L142.3 207.3 L146.6 212.4 L150.9 216.4 L155.2 218.7 L159.4 221.2 L163.7 224.1 L168.0 226.9 L172.2 230.1 L176.5 233.1 L181.5 235.9 L185.4 233.5 L189.7 231.1 L194.0 229.5 L199.6 227.8 L205.3 225.9 L211.0 224.9 L216.7 223.8 L221.0 225.7 L225.0 228.4 L228.8 229.7 L232.0 230.9 L235.1 232.2 L238.9 231.9 L244.0 230.6 L247.8 229.3 L250.3 226.5 L252.8 222.7 L255.3 218.9 L257.9 215.1 L260.4 212.0 L262.9 208.5 L265.5 205.9 L267.1 200.6 L271.4 195.2 L275.6 189.9 L279.9 185.6 L284.2 182.1 L288.4 179.5 L292.7 177.8 L297.0 175.2 L301.2 173.3 L306.9 172.8 L312.6 173.8 L318.3 176.0 L324.0 178.1 L329.7 180.4 L335.4 182.8 L341.1 183.2 L346.8 183.1 L352.5 182.8 L358.2 182.8 L363.9 183.8 L369.6 184.6 L375.3 185.6 L381.0 186.6 L385.2 189.2 L390.2 191.3 L395.2 190.6 L399.5 191.0 L403.0 190.6 L406.6 187.1 L410.9 182.8 L415.1 178.5 L418.3 174.9 L421.5 171.7 L424.0 167.9 L425.9 164.1 L427.8 159.1 L429.7 152.8 L431.6 146.4 L433.5 140.1 L435.4 135.7 L437.3 132.5 L439.2 130.0 L444.1 120.5 L448.4 114.1 L452.7 108.4 L456.9 104.1 L461.2 99.9 L465.5 95.6 L469.8 91.6 L474.0 89.2 L478.3 89.9 L482.6 89.9 L486.8 92.0 L491.1 93.5 L496.8 93.2 L501.1 94.9 L505.3 97.0 L509.6 99.6 L513.9 99.9 L516.7 97.3 L520.3 93.5 L523.8 90.6 L528.1 88.5 L532.4 87.3 L536.7 84.9 L540.0 83.1 L544.3 78.4 L548.5 76.5 L552.8 74.1 L557.1 70.8 L562.8 67.0 L567.0 66.7 L572.0 66.6 L575.6 62.7 L579.9 58.5 L584.1 53.5 L588.4 47.8 L592.0 43.8 L595.5 42.8 L601.2 43.2 L606.9 42.8 L612.6 43.1 L618.3 43.9 L625.4 44.5 L632.5 43.8 L639.6 45.4 L646.8 46.1 L653.9 45.9 L661.0 45.4 L666.7 46.4 L671.0 47.8 L674.5 49.9 L678.1 54.9 L682.3 60.3 L685.2 59.2 L689.5 58.5 L695.2 58.7 L700.0 57.3 L704.3 56.3 L709.3 55.6 L714.2 57.0 L721.4 57.8 L728.5 58.2 L735.6 58.5 L741.3 57.8 L745.6 57.8 L749.8 62.0 L754.1 66.3 L758.4 70.6 L762.6 74.4 L766.9 78.7 L771.2 79.8 L776.9 80.5 L782.6 84.1 L786.8 86.5 L792.5 89.1 L798.2 91.9 L802.5 97.6 L806.8 102.2 L812.5 100.5 L818.1 100.0 L825.3 100.5 L833.8 99.8 L838.1 102.6 L842.3 106.2 L848.0 109.0 L853.7 111.1 L859.4 111.4 L865.1 111.6 L869.4 115.1 L873.7 119.0 L877.9 122.5 L882.8 125.9 L887.0 125.3 L891.3 127.0 L895.6 125.9 L900.6 123.9 L907.0 124.6 L914.1 124.9 L921.2 125.2 L926.9 124.9 L931.2 122.7 L936.2 119.9 L942.6 120.2 L949.7 120.3 L956.8 119.9 L962.5 119.6 L967.5 120.2 L972.5 124.2 L976.7 128.7 L981.0 133.4 L985.3 139.8 L989.5 145.8 L993.8 145.9 L998.1 146.9 L1002.3 150.1 L1006.6 153.6 L1010.9 157.6 L1015.2 161.9 L1019.4 162.6 L1025.1 162.6 L1030.8 163.7 L1036.5 165.2 L1042.2 166.2 L1046.5 164.4" stroke="#ffd200" stroke-width="1.9" fill="none" stroke-linejoin="round" stroke-linecap="round"/>
<path d="M594.4 36.7 L1400 308.9 M594.4 84.5 L1400 357.4" stroke="#b00a0a" stroke-width="1.15" fill="none"/>
</g>
<defs><clipPath id="cmacd"><rect x="0" y="336" width="1400" height="186"/></clipPath></defs>
<g clip-path="url(#cmacd)">
<path d="M-3.45 444.78H0.99V447.00H-3.45ZM0.99 442.02H5.42V447.00H0.99ZM5.42 439.18H9.86V447.00H5.42ZM9.86 437.15H14.30V447.00H9.86ZM14.30 436.96H18.74V447.00H14.30ZM18.74 438.46H23.17V447.00H18.74ZM23.17 440.70H27.61V447.00H23.17ZM27.61 442.95H32.05V447.00H27.61ZM32.05 445.08H36.48V447.00H32.05ZM36.48 446.53H40.92V447.13H36.48ZM40.92 447.00H45.36V447.87H40.92ZM45.36 447.00H49.80V448.64H45.36ZM49.80 447.00H54.23V448.55H49.80ZM54.23 447.00H58.67V448.98H54.23ZM58.67 447.00H63.11V452.91H58.67ZM63.11 447.00H67.55V456.29H63.11ZM67.55 447.00H71.98V456.80H67.55ZM71.98 447.00H76.42V457.53H71.98ZM76.42 447.00H80.86V457.37H76.42ZM80.86 447.00H85.29V457.26H80.86ZM85.29 447.00H89.73V457.01H85.29ZM89.73 447.00H94.17V456.62H89.73ZM94.17 447.00H98.61V457.29H94.17ZM98.61 447.00H103.04V458.11H98.61ZM103.04 447.00H107.48V458.45H103.04ZM107.48 447.00H111.92V458.65H107.48ZM111.92 447.00H116.35V457.04H111.92ZM116.35 447.00H120.79V458.54H116.35ZM120.79 447.00H125.23V459.12H120.79ZM125.23 447.00H129.67V459.08H125.23ZM129.67 447.00H134.10V459.48H129.67ZM134.10 447.00H138.54V458.33H134.10ZM138.54 447.00H142.98V453.75H138.54ZM142.98 447.00H147.41V450.47H142.98ZM147.41 445.60H151.85V447.00H147.41ZM151.85 440.67H156.29V447.00H151.85ZM156.29 436.75H160.73V447.00H156.29ZM160.73 435.37H165.16V447.00H160.73ZM165.16 435.63H169.60V447.00H165.16ZM169.60 434.95H174.04V447.00H169.60ZM174.04 434.16H178.48V447.00H174.04ZM178.48 432.74H182.91V447.00H178.48ZM182.91 430.21H187.35V447.00H182.91ZM187.35 430.11H191.79V447.00H187.35ZM191.79 432.45H196.22V447.00H191.79ZM196.22 433.63H200.66V447.00H196.22ZM200.66 434.88H205.10V447.00H200.66ZM205.10 436.77H209.54V447.00H205.10ZM209.54 438.01H213.97V447.00H209.54ZM213.97 439.54H218.41V447.00H213.97ZM218.41 442.08H222.85V447.00H218.41ZM222.85 443.95H227.28V447.00H222.85ZM227.28 444.99H231.72V447.00H227.28ZM231.72 444.81H236.16V447.00H231.72ZM236.16 443.32H240.60V447.00H236.16ZM240.60 442.27H245.03V447.00H240.60ZM245.03 440.89H249.47V447.00H245.03ZM249.47 435.95H253.91V447.00H249.47ZM253.91 431.76H258.34V447.00H253.91ZM258.34 429.24H262.78V447.00H258.34ZM262.78 428.38H267.22V447.00H262.78ZM267.22 428.12H271.66V447.00H267.22ZM271.66 428.33H276.09V447.00H271.66ZM276.09 429.56H280.53V447.00H276.09ZM280.53 431.78H284.97V447.00H280.53ZM284.97 435.11H289.41V447.00H284.97ZM289.41 439.54H293.84V447.00H289.41ZM293.84 440.01H298.28V447.00H293.84ZM298.28 442.76H302.72V447.00H298.28ZM302.72 447.00H307.15V447.72H302.72ZM307.15 447.00H311.59V450.21H307.15ZM311.59 447.00H316.03V451.47H311.59ZM316.03 447.00H320.47V455.80H316.03ZM320.47 447.00H324.90V461.55H320.47ZM324.90 447.00H329.34V461.88H324.90ZM329.34 447.00H333.78V461.31H329.34ZM333.78 447.00H338.21V457.34H333.78ZM338.21 447.00H342.65V454.56H338.21ZM342.65 447.00H347.09V452.44H342.65ZM347.09 447.00H351.53V450.08H347.09ZM351.53 447.00H355.96V449.20H351.53ZM355.96 447.00H360.40V450.33H355.96ZM360.40 447.00H364.84V453.78H360.40ZM364.84 447.00H369.27V458.01H364.84ZM369.27 447.00H373.71V460.41H369.27ZM373.71 447.00H378.15V459.77H373.71ZM378.15 447.00H382.59V455.68H378.15ZM382.59 447.00H387.02V452.69H382.59ZM387.02 447.00H391.46V450.16H387.02ZM391.46 447.00H395.90V448.37H391.46ZM395.90 446.51H400.34V447.11H395.90ZM400.34 442.87H404.77V447.00H400.34ZM404.77 438.04H409.21V447.00H404.77ZM409.21 434.55H413.65V447.00H409.21ZM413.65 432.33H418.08V447.00H413.65ZM418.08 431.26H422.52V447.00H418.08ZM422.52 426.87H426.96V447.00H422.52ZM426.96 419.76H431.40V447.00H426.96ZM431.40 414.45H435.83V447.00H431.40ZM435.83 416.32H440.27V447.00H435.83ZM440.27 419.04H444.71V447.00H440.27ZM444.71 422.34H449.14V447.00H444.71ZM449.14 425.70H453.58V447.00H449.14ZM453.58 427.75H458.02V447.00H453.58ZM458.02 428.87H462.46V447.00H458.02ZM462.46 430.58H466.89V447.00H462.46ZM466.89 432.98H471.33V447.00H466.89ZM471.33 435.44H475.77V447.00H471.33ZM475.77 443.82H480.20V447.00H475.77ZM480.20 447.00H484.64V447.83H480.20ZM484.64 447.00H489.08V450.62H484.64ZM489.08 447.00H493.52V450.75H489.08ZM493.52 447.00H497.95V449.44H493.52ZM497.95 447.00H502.39V451.19H497.95ZM502.39 447.00H506.83V452.11H502.39ZM506.83 447.00H511.27V450.85H506.83ZM511.27 447.00H515.70V449.12H511.27ZM515.70 446.77H520.14V447.37H515.70ZM520.14 445.62H524.58V447.00H520.14ZM524.58 446.85H529.01V447.45H524.58ZM529.01 447.00H533.45V448.70H529.01ZM533.45 447.00H537.89V448.22H533.45ZM537.89 446.88H542.33V447.48H537.89ZM542.33 446.57H546.76V447.17H542.33ZM546.76 447.00H551.20V448.83H546.76ZM551.20 447.00H555.64V449.14H551.20ZM555.64 447.00H560.07V448.58H555.64ZM560.07 447.00H564.51V447.97H560.07ZM564.51 447.00H568.95V448.77H564.51ZM568.95 447.00H573.39V449.57H568.95ZM573.39 444.61H577.82V447.00H573.39ZM577.82 442.63H582.26V447.00H577.82ZM582.26 440.00H586.70V447.00H582.26ZM586.70 436.96H591.13V447.00H586.70ZM591.13 438.90H595.57V447.00H591.13ZM595.57 447.00H600.01V447.60H595.57ZM600.01 447.00H604.45V452.75H600.01ZM604.45 447.00H608.88V457.33H604.45ZM608.88 447.00H613.32V463.27H608.88ZM613.32 447.00H617.76V465.90H613.32ZM617.76 447.00H622.20V467.14H617.76ZM622.20 447.00H626.63V465.19H622.20ZM626.63 447.00H631.07V463.75H626.63ZM631.07 447.00H635.51V460.28H631.07ZM635.51 447.00H639.94V460.06H635.51ZM639.94 447.00H644.38V461.15H639.94ZM644.38 447.00H648.82V462.19H644.38ZM648.82 447.00H653.26V463.09H648.82ZM653.26 447.00H657.69V463.62H653.26ZM657.69 447.00H662.13V460.20H657.69ZM662.13 447.00H666.57V456.46H662.13ZM666.57 447.00H671.00V455.87H666.57ZM671.00 447.00H675.44V455.78H671.00ZM675.44 447.00H679.88V456.00H675.44ZM679.88 447.00H684.32V458.81H679.88ZM684.32 447.00H688.75V462.79H684.32ZM688.75 447.00H693.19V462.87H688.75ZM693.19 447.00H697.63V462.90H693.19ZM697.63 447.00H702.06V463.86H697.63ZM702.06 447.00H706.50V463.65H702.06ZM706.50 447.00H710.94V461.88H706.50ZM710.94 447.00H715.38V457.72H710.94ZM715.38 447.00H719.81V458.92H715.38ZM719.81 447.00H724.25V461.78H719.81ZM724.25 447.00H728.69V463.08H724.25ZM728.69 447.00H733.13V463.08H728.69ZM733.13 447.00H737.56V462.31H733.13ZM737.56 447.00H742.00V463.92H737.56ZM742.00 447.00H746.44V462.64H742.00ZM746.44 447.00H750.87V454.21H746.44ZM750.87 447.00H755.31V448.77H750.87ZM755.31 447.00H759.75V449.40H755.31ZM759.75 447.00H764.19V450.68H759.75ZM764.19 447.00H768.62V452.23H764.19ZM768.62 447.00H773.06V454.95H768.62ZM773.06 447.00H777.50V453.46H773.06ZM777.50 447.00H781.93V448.43H777.50ZM781.93 444.68H786.37V447.00H781.93ZM786.37 443.44H790.81V447.00H786.37ZM790.81 443.38H795.25V447.00H790.81ZM795.25 444.62H799.68V447.00H795.25ZM799.68 443.92H804.12V447.00H799.68ZM804.12 445.86H808.56V447.00H804.12ZM808.56 447.00H812.99V449.43H808.56ZM812.99 447.00H817.43V451.53H812.99ZM817.43 447.00H821.87V453.20H817.43ZM821.87 447.00H826.31V452.03H821.87ZM826.31 447.00H830.74V451.55H826.31ZM830.74 447.00H835.18V452.23H830.74ZM835.18 447.00H839.62V454.03H835.18ZM839.62 447.00H844.06V453.47H839.62ZM844.06 447.00H848.49V448.60H844.06ZM848.49 444.66H852.93V447.00H848.49ZM852.93 443.34H857.37V447.00H852.93ZM857.37 444.02H861.80V447.00H857.37ZM861.80 444.88H866.24V447.00H861.80ZM866.24 446.12H870.68V447.00H866.24ZM870.68 446.16H875.12V447.00H870.68ZM875.12 445.42H879.55V447.00H875.12ZM879.55 437.88H883.99V447.00H879.55ZM883.99 431.64H888.43V447.00H883.99ZM888.43 429.11H892.86V447.00H888.43ZM892.86 427.72H897.30V447.00H892.86ZM897.30 427.63H901.74V447.00H897.30ZM901.74 433.86H906.18V447.00H901.74ZM906.18 440.01H910.61V447.00H906.18ZM910.61 440.88H915.05V447.00H910.61ZM915.05 442.95H919.49V447.00H915.05ZM919.49 444.77H923.92V447.00H919.49ZM923.92 447.00H928.36V448.78H923.92ZM928.36 447.00H932.80V456.36H928.36ZM932.80 447.00H937.24V461.36H932.80ZM937.24 447.00H941.67V461.21H937.24ZM941.67 447.00H946.11V458.83H941.67ZM946.11 447.00H950.55V456.51H946.11ZM950.55 447.00H954.99V454.91H950.55ZM954.99 447.00H959.42V454.26H954.99ZM959.42 447.00H963.86V450.40H959.42ZM963.86 447.00H968.30V447.60H963.86ZM968.30 445.12H972.73V447.00H968.30ZM972.73 444.41H977.17V447.00H972.73ZM977.17 444.76H981.61V447.00H977.17ZM981.61 445.70H986.05V447.00H981.61ZM986.05 447.00H990.48V448.73H986.05ZM990.48 447.00H994.92V453.14H990.48ZM994.92 447.00H999.36V454.78H994.92ZM999.36 447.00H1003.79V455.32H999.36ZM1003.79 447.00H1008.23V454.21H1003.79ZM1008.23 447.00H1012.67V451.27H1008.23ZM1012.67 447.00H1017.11V448.02H1012.67ZM1017.11 444.72H1021.54V447.00H1017.11ZM1021.54 441.23H1025.98V447.00H1021.54ZM1025.98 439.66H1030.42V447.00H1025.98ZM1030.42 437.72H1034.85V447.00H1030.42ZM1034.85 437.10H1039.29V447.00H1034.85ZM1039.29 441.13H1043.73V447.00H1039.29ZM1043.73 447.00H1048.17V448.20H1043.73Z" fill="#8b87f0" stroke="#5a57b0" stroke-width="0.8"/>
<path d="M0.1 458.4 L4.6 457.4 L9.0 455.4 L13.5 453.0 L17.9 450.6 L22.3 448.5 L26.8 446.8 L31.2 445.8 L35.6 445.4 L40.1 445.2 L44.5 445.3 L49.0 445.5 L53.4 445.7 L57.8 446.4 L62.3 448.1 L66.7 450.7 L71.1 453.4 L75.6 456.0 L80.0 458.6 L84.5 461.2 L88.9 463.6 L93.3 466.0 L97.8 468.6 L102.2 471.5 L106.6 474.4 L111.1 477.2 L115.5 479.9 L120.0 482.7 L124.4 485.8 L128.8 488.8 L133.3 491.9 L137.7 494.5 L142.1 496.2 L146.6 496.9 L151.0 496.6 L155.5 495.2 L159.9 492.7 L164.3 490.1 L168.8 487.5 L173.2 484.6 L177.6 481.6 L182.1 478.4 L186.5 474.6 L190.9 469.5 L195.4 465.9 L199.8 462.4 L204.3 459.3 L208.7 456.8 L213.1 454.4 L217.6 452.5 L222.0 451.3 L226.4 450.5 L230.9 450.0 L235.3 449.4 L239.8 448.5 L244.2 447.3 L248.6 445.7 L253.1 443.2 L257.5 439.5 L261.9 435.4 L266.4 430.7 L270.8 425.8 L275.3 420.9 L279.7 416.5 L284.1 412.7 L288.6 409.9 L293.0 408.1 L297.4 406.4 L301.9 405.4 L306.3 405.5 L310.8 406.2 L315.2 407.5 L319.6 409.8 L324.1 413.4 L328.5 417.0 L332.9 420.3 L337.4 422.9 L341.8 424.7 L346.3 426.0 L350.7 426.7 L355.1 427.2 L359.6 427.8 L364.0 429.2 L368.4 431.7 L372.9 434.9 L377.3 437.9 L381.7 440.2 L386.2 442.2 L390.6 443.2 L395.1 443.5 L399.5 443.2 L403.9 442.0 L408.4 439.5 L412.8 436.4 L417.2 432.7 L421.7 428.7 L426.1 423.7 L430.6 416.8 L435.0 408.7 L439.4 400.8 L443.9 393.5 L448.3 387.4 L452.7 381.7 L457.2 377.0 L461.6 372.5 L466.1 368.4 L470.5 364.9 L474.9 362.4 L479.4 361.6 L483.8 361.9 L488.2 362.8 L492.7 363.7 L497.1 364.5 L501.6 365.6 L506.0 366.9 L510.4 367.7 L514.9 368.2 L519.3 368.1 L523.7 367.8 L528.2 368.0 L532.6 368.5 L537.1 368.9 L541.5 368.6 L545.9 368.7 L550.4 369.2 L554.8 369.8 L559.2 370.2 L563.7 370.4 L568.1 370.8 L572.5 371.3 L577.0 370.7 L581.4 369.5 L585.9 367.6 L590.3 365.2 L594.7 363.3 L599.2 363.2 L603.6 364.7 L608.0 367.5 L612.5 371.4 L616.9 376.0 L621.4 380.9 L625.8 385.4 L630.2 389.4 L634.7 392.6 L639.1 395.8 L643.5 399.2 L648.0 402.8 L652.4 406.7 L656.9 410.7 L661.3 414.0 L665.7 416.4 L670.2 418.4 L674.6 421.1 L679.0 423.9 L683.5 427.3 L687.9 431.4 L692.4 435.6 L696.8 439.9 L701.2 444.4 L705.7 448.6 L710.1 452.1 L714.5 454.9 L719.0 457.9 L723.4 461.7 L727.9 466.0 L732.3 470.3 L736.7 474.3 L741.2 478.5 L745.6 482.2 L750.0 484.0 L754.5 484.6 L758.9 485.2 L763.3 486.2 L767.8 487.5 L772.2 489.4 L776.7 491.0 L781.1 491.3 L785.5 490.8 L790.0 489.9 L794.4 489.1 L798.8 488.6 L803.3 487.9 L807.7 487.7 L812.2 488.2 L816.6 489.3 L821.0 490.7 L825.5 491.8 L829.9 493.0 L834.3 494.3 L838.8 496.0 L843.2 497.7 L847.7 498.2 L852.1 497.8 L856.5 496.9 L861.0 496.3 L865.4 495.8 L869.8 495.6 L874.3 495.4 L878.7 495.1 L883.2 492.7 L887.6 489.0 L892.0 484.5 L896.5 479.7 L900.9 475.1 L905.3 472.1 L909.8 470.4 L914.2 469.0 L918.7 468.0 L923.1 467.5 L927.5 468.0 L932.0 470.1 L936.4 473.3 L940.8 476.7 L945.3 479.6 L949.7 481.9 L954.1 483.8 L958.6 485.5 L963.0 486.3 L967.5 486.4 L971.9 486.0 L976.3 485.4 L980.8 484.9 L985.2 484.7 L989.6 485.1 L994.1 486.6 L998.5 488.5 L1003.0 490.5 L1007.4 492.3 L1011.8 493.4 L1016.3 493.8 L1020.7 493.4 L1025.1 492.1 L1029.6 490.2 L1034.0 487.9 L1038.5 485.6 L1042.9 484.2 L1047.3 484.2" stroke="#2ba6dc" stroke-width="1.75" fill="none" stroke-linejoin="round" stroke-linecap="round"/>
<path d="M0.0 456.3 L2.8 454.1 L5.7 451.3 L8.5 448.1 L11.4 444.9 L14.2 442.5 L17.8 440.6 L21.4 439.9 L24.9 440.2 L28.5 440.9 L32.0 442.0 L35.6 443.5 L39.1 444.4 L42.7 445.6 L46.3 446.7 L49.8 447.3 L53.4 447.3 L56.2 447.3 L59.1 449.1 L61.9 453.4 L65.5 459.1 L69.0 461.5 L72.6 464.4 L76.2 466.9 L79.7 468.8 L84.0 471.2 L88.3 473.3 L92.5 475.1 L96.8 478.0 L101.1 481.9 L105.3 484.7 L109.6 488.3 L112.5 489.4 L115.3 489.7 L118.9 493.3 L122.4 496.5 L126.0 499.0 L129.5 501.4 L133.1 504.2 L136.7 506.5 L140.2 504.2 L143.8 501.8 L147.3 500.0 L150.9 495.4 L154.4 490.4 L158.0 484.7 L161.6 480.5 L165.1 477.9 L168.7 476.2 L172.2 473.3 L176.5 469.8 L180.8 465.8 L184.3 461.2 L187.9 455.6 L190.0 452.9 L194.3 451.9 L198.5 449.8 L202.8 447.3 L207.1 446.9 L211.4 445.9 L215.6 444.8 L218.5 445.2 L222.7 446.6 L227.0 447.6 L231.3 448.0 L235.6 447.2 L239.8 444.8 L244.1 442.6 L247.7 441.2 L251.2 435.5 L255.5 427.7 L259.8 420.6 L264.0 414.9 L268.3 409.9 L272.6 404.9 L276.8 400.6 L281.1 398.2 L284.7 397.4 L288.2 397.8 L292.5 400.9 L296.0 399.2 L300.3 399.9 L303.9 402.8 L306.7 406.8 L311.0 409.6 L315.3 412.0 L319.5 418.4 L323.8 427.7 L328.1 431.5 L332.3 434.8 L336.6 433.4 L340.9 432.4 L345.2 432.0 L349.4 430.1 L353.7 429.1 L358.0 429.8 L362.2 433.4 L366.5 439.8 L370.8 446.2 L374.3 449.8 L376.5 451.2 L380.0 449.0 L383.6 448.8 L391.4 446.1 L395.7 444.6 L399.9 442.5 L404.2 437.5 L408.5 430.4 L412.7 424.0 L417.0 418.3 L421.3 413.8 L424.8 406.9 L428.4 397.7 L431.2 387.0 L434.1 377.5 L438.4 371.3 L442.6 366.4 L446.9 363.5 L451.2 361.1 L455.4 359.2 L459.7 355.7 L464.0 352.8 L468.3 351.1 L472.5 350.7 L474.7 350.4 L476.8 353.8 L479.6 359.0 L483.9 362.8 L488.2 366.4 L492.5 367.5 L496.7 366.6 L501.0 369.5 L505.3 372.0 L509.5 371.8 L513.8 370.9 L518.1 368.5 L522.3 366.4 L526.6 366.6 L530.9 369.9 L535.2 370.6 L539.4 369.5 L544.4 367.1 L548.7 370.3 L553.0 372.0 L557.9 371.8 L560.0 371.8 L564.3 371.3 L568.5 372.8 L571.7 375.2 L575.7 369.2 L579.9 366.4 L584.2 362.8 L587.8 358.1 L589.9 355.2 L594.2 354.3 L596.3 357.8 L599.1 363.5 L602.7 369.2 L607.0 375.2 L611.2 385.6 L615.5 392.7 L620.5 400.5 L625.5 403.4 L629.8 406.2 L634.0 405.5 L638.3 408.1 L642.6 412.3 L646.8 416.9 L651.1 421.2 L655.4 426.6 L658.2 428.0 L660.0 427.8 L662.8 426.4 L666.4 425.7 L670.0 427.1 L674.2 429.7 L677.8 431.4 L681.4 435.7 L684.9 441.4 L687.8 447.0 L691.3 450.6 L695.6 454.2 L699.9 459.9 L704.1 464.1 L709.1 467.7 L713.4 464.8 L717.7 467.7 L721.2 473.4 L724.8 478.4 L728.3 482.6 L732.6 486.6 L736.9 489.8 L741.1 495.4 L745.0 498.7 L748.3 494.0 L751.8 488.3 L754.7 486.2 L758.2 487.2 L762.5 489.5 L766.8 491.5 L771.0 496.9 L775.3 498.7 L778.9 495.4 L782.4 491.2 L786.0 488.0 L790.2 486.2 L794.5 485.5 L798.8 486.2 L803.1 484.8 L807.3 486.2 L810.9 489.8 L815.9 493.3 L820.9 496.9 L825.8 496.9 L830.1 497.6 L833.7 499.0 L837.9 502.6 L842.2 505.1 L845.8 501.9 L849.3 498.0 L852.8 494.7 L855.7 493.3 L860.0 493.3 L864.2 493.3 L868.5 494.7 L873.5 494.7 L878.5 494.0 L881.3 488.3 L884.9 479.1 L887.7 473.4 L891.3 467.7 L894.8 462.7 L898.4 457.7 L900.5 455.6 L903.4 457.0 L906.9 460.6 L909.8 463.4 L913.3 462.7 L916.9 463.4 L920.5 464.5 L924.0 465.5 L927.6 469.8 L931.1 477.6 L935.4 486.9 L940.4 490.9 L945.4 491.4 L951.1 491.4 L955.3 491.9 L958.2 493.0 L962.5 490.2 L966.7 486.9 L971.0 484.5 L975.3 482.9 L979.5 482.6 L983.8 482.9 L988.1 484.3 L992.3 491.2 L996.6 495.0 L1001.6 498.3 L1005.9 500.0 L1010.1 498.7 L1014.4 496.1 L1019.4 492.6 L1024.4 486.9 L1029.4 483.0 L1034.3 478.3 L1037.9 475.5 L1041.5 476.9 L1044.3 479.8 L1047.2 484.8" stroke="#ffd200" stroke-width="1.75" fill="none" stroke-linejoin="round" stroke-linecap="round"/>
</g>
<defs><clipPath id="cup"><rect x="0" y="523" width="1400" height="67.5"/></clipPath><clipPath id="cdn"><rect x="0" y="646.5" width="1400" height="62.5"/></clipPath></defs>
<path d="M0.1 620.4 L4.6 601.2 L9.0 579.8 L13.5 567.7 L17.9 574.1 L22.3 588.4 L26.8 605.7 L31.2 614.2 L35.6 623.5 L40.1 624.5 L44.5 632.7 L49.0 618.2 L53.4 614.9 L57.8 622.8 L62.3 674.0 L66.7 693.2 L71.1 666.2 L75.6 660.5 L80.0 656.9 L84.5 655.5 L88.9 653.8 L93.3 644.6 L97.8 647.7 L102.2 654.4 L106.6 656.9 L111.1 658.6 L115.5 647.7 L120.0 662.3 L124.4 665.5 L128.8 657.7 L133.3 661.9 L137.7 661.2 L142.1 641.0 L146.6 638.7 L151.0 633.5 L155.5 616.8 L159.9 611.4 L164.3 612.1 L168.8 618.5 L173.2 610.0 L177.6 602.1 L182.1 599.1 L186.5 575.6 L190.9 575.3 L195.4 598.3 L199.8 595.5 L204.3 591.9 L208.7 600.2 L213.1 603.0 L217.6 599.5 L222.0 612.3 L226.4 616.9 L230.9 620.8 L235.3 622.5 L239.8 600.5 L244.2 589.8 L248.6 591.9 L253.1 548.5 L257.5 537.6 L261.9 545.7 L266.4 560.9 L270.8 567.7 L275.3 574.1 L279.7 581.0 L284.1 584.8 L288.6 593.1 L293.0 598.3 L297.4 595.9 L301.9 596.9 L306.3 609.7 L310.8 609.3 L315.2 608.7 L319.6 621.8 L324.1 646.3 L328.5 648.4 L332.9 642.0 L337.4 619.9 L341.8 617.8 L346.3 615.9 L350.7 612.2 L355.1 613.6 L359.6 617.6 L364.0 644.1 L368.4 669.3 L372.9 659.1 L377.3 649.1 L381.7 620.4 L386.2 620.1 L390.6 621.5 L395.1 597.2 L399.5 608.3 L403.9 601.2 L408.4 569.9 L412.8 560.6 L417.2 561.3 L421.7 569.9 L426.1 559.9 L430.6 550.2 L435.0 556.4 L439.4 574.1 L443.9 580.6 L448.3 586.2 L452.7 587.4 L457.2 589.1 L461.6 585.8 L466.1 590.2 L470.5 590.9 L474.9 593.6 L479.4 605.9 L483.8 603.8 L488.2 604.8 L492.7 596.2 L497.1 588.8 L501.6 594.8 L506.0 600.5 L510.4 583.4 L514.9 578.4 L519.3 569.9 L523.7 564.9 L528.2 578.8 L532.6 589.1 L537.1 582.7 L541.5 580.3 L545.9 573.9 L550.4 590.8 L554.8 593.1 L559.2 584.1 L563.7 581.7 L568.1 588.4 L572.5 595.5 L577.0 571.7 L581.4 573.1 L585.9 571.7 L590.3 562.3 L594.7 571.7 L599.2 600.8 L603.6 610.0 L608.0 605.2 L612.5 621.5 L616.9 627.2 L621.4 623.5 L625.8 628.7 L630.2 613.0 L634.7 604.8 L639.1 619.0 L643.5 624.4 L648.0 633.0 L652.4 635.3 L656.9 653.4 L661.3 628.5 L665.7 613.2 L670.2 615.9 L674.6 627.3 L679.0 622.8 L683.5 652.7 L687.9 682.6 L692.4 666.2 L696.8 654.1 L701.2 665.9 L705.7 664.1 L710.1 654.8 L714.5 636.7 L719.0 644.1 L723.4 665.8 L727.9 668.3 L732.3 660.5 L736.7 652.7 L741.2 663.1 L745.6 660.9 L750.0 634.2 L754.5 626.0 L758.9 639.9 L763.3 647.0 L767.8 656.2 L772.2 654.1 L776.7 653.8 L781.1 625.3 L785.5 622.5 L790.0 632.7 L794.4 635.3 L798.8 638.1 L803.3 634.9 L807.7 644.1 L812.2 663.8 L816.6 665.5 L821.0 662.6 L825.5 649.1 L829.9 652.7 L834.3 654.8 L838.8 661.5 L843.2 661.9 L847.7 638.1 L852.1 624.9 L856.5 634.9 L861.0 645.3 L865.4 647.0 L869.8 649.1 L874.3 650.5 L878.7 638.1 L883.2 601.9 L887.6 574.9 L892.0 583.7 L896.5 582.3 L900.9 586.0 L905.3 628.5 L909.8 634.2 L914.2 614.2 L918.7 616.4 L923.1 627.8 L927.5 641.3 L932.0 664.1 L936.4 680.4 L940.8 658.4 L945.3 642.7 L949.7 641.0 L954.1 646.7 L958.6 646.3 L963.0 634.9 L967.5 631.0 L971.9 630.6 L976.3 629.9 L980.8 638.7 L985.2 635.3 L989.6 654.1 L994.1 672.3 L998.5 664.1 L1003.0 661.5 L1007.4 658.4 L1011.8 642.0 L1016.3 634.2 L1020.7 641.3 L1025.1 622.1 L1029.6 621.1 L1034.0 619.6 L1038.5 616.8 L1042.9 643.4 L1047.3 668.8 L1047.3 590.5 L0.1 590.5 Z" fill="#a4eca8" clip-path="url(#cup)"/>
<path d="M0.1 620.4 L4.6 601.2 L9.0 579.8 L13.5 567.7 L17.9 574.1 L22.3 588.4 L26.8 605.7 L31.2 614.2 L35.6 623.5 L40.1 624.5 L44.5 632.7 L49.0 618.2 L53.4 614.9 L57.8 622.8 L62.3 674.0 L66.7 693.2 L71.1 666.2 L75.6 660.5 L80.0 656.9 L84.5 655.5 L88.9 653.8 L93.3 644.6 L97.8 647.7 L102.2 654.4 L106.6 656.9 L111.1 658.6 L115.5 647.7 L120.0 662.3 L124.4 665.5 L128.8 657.7 L133.3 661.9 L137.7 661.2 L142.1 641.0 L146.6 638.7 L151.0 633.5 L155.5 616.8 L159.9 611.4 L164.3 612.1 L168.8 618.5 L173.2 610.0 L177.6 602.1 L182.1 599.1 L186.5 575.6 L190.9 575.3 L195.4 598.3 L199.8 595.5 L204.3 591.9 L208.7 600.2 L213.1 603.0 L217.6 599.5 L222.0 612.3 L226.4 616.9 L230.9 620.8 L235.3 622.5 L239.8 600.5 L244.2 589.8 L248.6 591.9 L253.1 548.5 L257.5 537.6 L261.9 545.7 L266.4 560.9 L270.8 567.7 L275.3 574.1 L279.7 581.0 L284.1 584.8 L288.6 593.1 L293.0 598.3 L297.4 595.9 L301.9 596.9 L306.3 609.7 L310.8 609.3 L315.2 608.7 L319.6 621.8 L324.1 646.3 L328.5 648.4 L332.9 642.0 L337.4 619.9 L341.8 617.8 L346.3 615.9 L350.7 612.2 L355.1 613.6 L359.6 617.6 L364.0 644.1 L368.4 669.3 L372.9 659.1 L377.3 649.1 L381.7 620.4 L386.2 620.1 L390.6 621.5 L395.1 597.2 L399.5 608.3 L403.9 601.2 L408.4 569.9 L412.8 560.6 L417.2 561.3 L421.7 569.9 L426.1 559.9 L430.6 550.2 L435.0 556.4 L439.4 574.1 L443.9 580.6 L448.3 586.2 L452.7 587.4 L457.2 589.1 L461.6 585.8 L466.1 590.2 L470.5 590.9 L474.9 593.6 L479.4 605.9 L483.8 603.8 L488.2 604.8 L492.7 596.2 L497.1 588.8 L501.6 594.8 L506.0 600.5 L510.4 583.4 L514.9 578.4 L519.3 569.9 L523.7 564.9 L528.2 578.8 L532.6 589.1 L537.1 582.7 L541.5 580.3 L545.9 573.9 L550.4 590.8 L554.8 593.1 L559.2 584.1 L563.7 581.7 L568.1 588.4 L572.5 595.5 L577.0 571.7 L581.4 573.1 L585.9 571.7 L590.3 562.3 L594.7 571.7 L599.2 600.8 L603.6 610.0 L608.0 605.2 L612.5 621.5 L616.9 627.2 L621.4 623.5 L625.8 628.7 L630.2 613.0 L634.7 604.8 L639.1 619.0 L643.5 624.4 L648.0 633.0 L652.4 635.3 L656.9 653.4 L661.3 628.5 L665.7 613.2 L670.2 615.9 L674.6 627.3 L679.0 622.8 L683.5 652.7 L687.9 682.6 L692.4 666.2 L696.8 654.1 L701.2 665.9 L705.7 664.1 L710.1 654.8 L714.5 636.7 L719.0 644.1 L723.4 665.8 L727.9 668.3 L732.3 660.5 L736.7 652.7 L741.2 663.1 L745.6 660.9 L750.0 634.2 L754.5 626.0 L758.9 639.9 L763.3 647.0 L767.8 656.2 L772.2 654.1 L776.7 653.8 L781.1 625.3 L785.5 622.5 L790.0 632.7 L794.4 635.3 L798.8 638.1 L803.3 634.9 L807.7 644.1 L812.2 663.8 L816.6 665.5 L821.0 662.6 L825.5 649.1 L829.9 652.7 L834.3 654.8 L838.8 661.5 L843.2 661.9 L847.7 638.1 L852.1 624.9 L856.5 634.9 L861.0 645.3 L865.4 647.0 L869.8 649.1 L874.3 650.5 L878.7 638.1 L883.2 601.9 L887.6 574.9 L892.0 583.7 L896.5 582.3 L900.9 586.0 L905.3 628.5 L909.8 634.2 L914.2 614.2 L918.7 616.4 L923.1 627.8 L927.5 641.3 L932.0 664.1 L936.4 680.4 L940.8 658.4 L945.3 642.7 L949.7 641.0 L954.1 646.7 L958.6 646.3 L963.0 634.9 L967.5 631.0 L971.9 630.6 L976.3 629.9 L980.8 638.7 L985.2 635.3 L989.6 654.1 L994.1 672.3 L998.5 664.1 L1003.0 661.5 L1007.4 658.4 L1011.8 642.0 L1016.3 634.2 L1020.7 641.3 L1025.1 622.1 L1029.6 621.1 L1034.0 619.6 L1038.5 616.8 L1042.9 643.4 L1047.3 668.8 L1047.3 646.5 L0.1 646.5 Z" fill="#eca8ac" clip-path="url(#cdn)"/>
<rect x="0" y="590" width="1346" height="1" fill="#dcdcdc"/><rect x="0" y="646" width="1346" height="1" fill="#dcdcdc"/>
<path d="M0.1 620.4 L4.6 601.2 L9.0 579.8 L13.5 567.7 L17.9 574.1 L22.3 588.4 L26.8 605.7 L31.2 614.2 L35.6 623.5 L40.1 624.5 L44.5 632.7 L49.0 618.2 L53.4 614.9 L57.8 622.8 L62.3 674.0 L66.7 693.2 L71.1 666.2 L75.6 660.5 L80.0 656.9 L84.5 655.5 L88.9 653.8 L93.3 644.6 L97.8 647.7 L102.2 654.4 L106.6 656.9 L111.1 658.6 L115.5 647.7 L120.0 662.3 L124.4 665.5 L128.8 657.7 L133.3 661.9 L137.7 661.2 L142.1 641.0 L146.6 638.7 L151.0 633.5 L155.5 616.8 L159.9 611.4 L164.3 612.1 L168.8 618.5 L173.2 610.0 L177.6 602.1 L182.1 599.1 L186.5 575.6 L190.9 575.3 L195.4 598.3 L199.8 595.5 L204.3 591.9 L208.7 600.2 L213.1 603.0 L217.6 599.5 L222.0 612.3 L226.4 616.9 L230.9 620.8 L235.3 622.5 L239.8 600.5 L244.2 589.8 L248.6 591.9 L253.1 548.5 L257.5 537.6 L261.9 545.7 L266.4 560.9 L270.8 567.7 L275.3 574.1 L279.7 581.0 L284.1 584.8 L288.6 593.1 L293.0 598.3 L297.4 595.9 L301.9 596.9 L306.3 609.7 L310.8 609.3 L315.2 608.7 L319.6 621.8 L324.1 646.3 L328.5 648.4 L332.9 642.0 L337.4 619.9 L341.8 617.8 L346.3 615.9 L350.7 612.2 L355.1 613.6 L359.6 617.6 L364.0 644.1 L368.4 669.3 L372.9 659.1 L377.3 649.1 L381.7 620.4 L386.2 620.1 L390.6 621.5 L395.1 597.2 L399.5 608.3 L403.9 601.2 L408.4 569.9 L412.8 560.6 L417.2 561.3 L421.7 569.9 L426.1 559.9 L430.6 550.2 L435.0 556.4 L439.4 574.1 L443.9 580.6 L448.3 586.2 L452.7 587.4 L457.2 589.1 L461.6 585.8 L466.1 590.2 L470.5 590.9 L474.9 593.6 L479.4 605.9 L483.8 603.8 L488.2 604.8 L492.7 596.2 L497.1 588.8 L501.6 594.8 L506.0 600.5 L510.4 583.4 L514.9 578.4 L519.3 569.9 L523.7 564.9 L528.2 578.8 L532.6 589.1 L537.1 582.7 L541.5 580.3 L545.9 573.9 L550.4 590.8 L554.8 593.1 L559.2 584.1 L563.7 581.7 L568.1 588.4 L572.5 595.5 L577.0 571.7 L581.4 573.1 L585.9 571.7 L590.3 562.3 L594.7 571.7 L599.2 600.8 L603.6 610.0 L608.0 605.2 L612.5 621.5 L616.9 627.2 L621.4 623.5 L625.8 628.7 L630.2 613.0 L634.7 604.8 L639.1 619.0 L643.5 624.4 L648.0 633.0 L652.4 635.3 L656.9 653.4 L661.3 628.5 L665.7 613.2 L670.2 615.9 L674.6 627.3 L679.0 622.8 L683.5 652.7 L687.9 682.6 L692.4 666.2 L696.8 654.1 L701.2 665.9 L705.7 664.1 L710.1 654.8 L714.5 636.7 L719.0 644.1 L723.4 665.8 L727.9 668.3 L732.3 660.5 L736.7 652.7 L741.2 663.1 L745.6 660.9 L750.0 634.2 L754.5 626.0 L758.9 639.9 L763.3 647.0 L767.8 656.2 L772.2 654.1 L776.7 653.8 L781.1 625.3 L785.5 622.5 L790.0 632.7 L794.4 635.3 L798.8 638.1 L803.3 634.9 L807.7 644.1 L812.2 663.8 L816.6 665.5 L821.0 662.6 L825.5 649.1 L829.9 652.7 L834.3 654.8 L838.8 661.5 L843.2 661.9 L847.7 638.1 L852.1 624.9 L856.5 634.9 L861.0 645.3 L865.4 647.0 L869.8 649.1 L874.3 650.5 L878.7 638.1 L883.2 601.9 L887.6 574.9 L892.0 583.7 L896.5 582.3 L900.9 586.0 L905.3 628.5 L909.8 634.2 L914.2 614.2 L918.7 616.4 L923.1 627.8 L927.5 641.3 L932.0 664.1 L936.4 680.4 L940.8 658.4 L945.3 642.7 L949.7 641.0 L954.1 646.7 L958.6 646.3 L963.0 634.9 L967.5 631.0 L971.9 630.6 L976.3 629.9 L980.8 638.7 L985.2 635.3 L989.6 654.1 L994.1 672.3 L998.5 664.1 L1003.0 661.5 L1007.4 658.4 L1011.8 642.0 L1016.3 634.2 L1020.7 641.3 L1025.1 622.1 L1029.6 621.1 L1034.0 619.6 L1038.5 616.8 L1042.9 643.4 L1047.3 668.8" stroke="#ffd200" stroke-width="1.9" fill="none" stroke-linejoin="round" stroke-linecap="round"/>
<rect x="0" y="335" width="1400" height="1" fill="#767676"/>
<rect x="0" y="522" width="1400" height="1" fill="#767676"/>
<rect x="92" y="330" width="1" height="5" fill="#8a8a8a"/>
<rect x="92" y="517" width="1" height="5" fill="#8a8a8a"/>
<rect x="92" y="704" width="1" height="5" fill="#8a8a8a"/>
<rect x="190" y="330" width="1" height="5" fill="#8a8a8a"/>
<rect x="190" y="517" width="1" height="5" fill="#8a8a8a"/>
<rect x="190" y="704" width="1" height="5" fill="#8a8a8a"/>
<rect x="279" y="330" width="1" height="5" fill="#8a8a8a"/>
<rect x="279" y="517" width="1" height="5" fill="#8a8a8a"/>
<rect x="279" y="704" width="1" height="5" fill="#8a8a8a"/>
<rect x="363" y="330" width="1" height="5" fill="#8a8a8a"/>
<rect x="363" y="517" width="1" height="5" fill="#8a8a8a"/>
<rect x="363" y="704" width="1" height="5" fill="#8a8a8a"/>
<rect x="456" y="330" width="1" height="5" fill="#8a8a8a"/>
<rect x="456" y="517" width="1" height="5" fill="#8a8a8a"/>
<rect x="456" y="704" width="1" height="5" fill="#8a8a8a"/>
<rect x="545" y="330" width="1" height="5" fill="#8a8a8a"/>
<rect x="545" y="517" width="1" height="5" fill="#8a8a8a"/>
<rect x="545" y="704" width="1" height="5" fill="#8a8a8a"/>
<rect x="643" y="330" width="1" height="5" fill="#8a8a8a"/>
<rect x="643" y="517" width="1" height="5" fill="#8a8a8a"/>
<rect x="643" y="704" width="1" height="5" fill="#8a8a8a"/>
<rect x="731" y="330" width="1" height="5" fill="#8a8a8a"/>
<rect x="731" y="517" width="1" height="5" fill="#8a8a8a"/>
<rect x="731" y="704" width="1" height="5" fill="#8a8a8a"/>
<rect x="816" y="330" width="1" height="5" fill="#8a8a8a"/>
<rect x="816" y="517" width="1" height="5" fill="#8a8a8a"/>
<rect x="816" y="704" width="1" height="5" fill="#8a8a8a"/>
<rect x="913" y="330" width="1" height="5" fill="#8a8a8a"/>
<rect x="913" y="517" width="1" height="5" fill="#8a8a8a"/>
<rect x="913" y="704" width="1" height="5" fill="#8a8a8a"/>
<rect x="1015" y="330" width="1" height="5" fill="#8a8a8a"/>
<rect x="1015" y="517" width="1" height="5" fill="#8a8a8a"/>
<rect x="1015" y="704" width="1" height="5" fill="#8a8a8a"/>
<rect x="1394.6" y="10" width="4.6" height="1" fill="#8b8583"/>
<rect x="1394.6" y="52" width="4.6" height="1" fill="#8b8583"/>
<rect x="1394.6" y="98" width="4.6" height="1" fill="#8b8583"/>
<rect x="1394.6" y="148" width="4.6" height="1" fill="#8b8583"/>
<rect x="1394.6" y="204" width="4.6" height="1" fill="#8b8583"/>
<rect x="1394.6" y="266" width="4.6" height="1" fill="#8b8583"/>
<rect x="1394.6" y="360" width="4.6" height="1" fill="#8b8583"/>
<rect x="1394.6" y="403" width="4.6" height="1" fill="#8b8583"/>
<rect x="1394.6" y="446" width="4.6" height="1" fill="#8b8583"/>
<rect x="1394.6" y="490" width="4.6" height="1" fill="#8b8583"/>
<rect x="1394.6" y="561" width="4.6" height="1" fill="#8b8583"/>
<rect x="1394.6" y="618" width="4.6" height="1" fill="#8b8583"/>
<rect x="1394.6" y="675" width="4.6" height="1" fill="#8b8583"/>
<rect x="5" y="8" width="508" height="16" fill="#191919"/>
<rect x="5" y="24" width="238" height="16" fill="#191919"/>
<rect x="5" y="40" width="143" height="16" fill="#191919"/>
<rect x="5" y="56" width="150" height="16" fill="#191919"/>
<rect x="5" y="72" width="240" height="16" fill="#191919"/>
<rect x="5" y="340" width="271" height="16" fill="#191919"/>
<rect x="5" y="527" width="180" height="16" fill="#191919"/>
<g fill="none" stroke="#d4d4d4" stroke-width="1"><path d="M7.5 16 V21 M11.5 10 V14 M11.5 18 V21 M15.5 12.5 V16"/><rect x="6.5" y="12.5" width="2" height="3.5"/><rect x="10.5" y="14.5" width="2" height="3.5"/><rect x="14.5" y="16.5" width="2" height="4"/></g>
<circle cx="12.4" cy="31.6" r="5" fill="none" stroke="#e6e6e6" stroke-width="1.2"/><path d="M12.4 28 V31.8 L14.6 33.6" fill="none" stroke="#e6e6e6" stroke-width="1.2"/>
<rect x="7.2" y="46.8" width="9.6" height="3" rx="0.8" fill="#0be41e"/>
<rect x="7.2" y="62.8" width="9.6" height="3" rx="0.8" fill="#fa0c0c"/>
<rect x="7.2" y="78.8" width="9.6" height="3" rx="0.8" fill="#fcd000"/>
<rect x="7.2" y="346.8" width="9.6" height="3" rx="0.8" fill="#fcd000"/>
<rect x="7.2" y="533.8" width="9.6" height="3" rx="0.8" fill="#fcd000"/>
<rect x="495.6" y="9.0" width="13.5" height="14" rx="2.5" fill="#282828"/><circle cx="502.3" cy="16.0" r="3.05" fill="none" stroke="#fff" stroke-width="2.1"/>
<rect x="114.2" y="41.0" width="13.5" height="14" rx="2.5" fill="#282828"/><circle cx="121.0" cy="48.0" r="3.05" fill="none" stroke="#fff" stroke-width="2.1"/>
<rect x="130.2" y="41.0" width="13.5" height="14" rx="2.5" fill="#282828"/><path d="M133.3 44.3 L140.7 51.7 M133.3 51.7 L140.7 44.3" stroke="#fff" stroke-width="1.9" stroke-linecap="butt"/>
<rect x="121.2" y="57.0" width="13.5" height="14" rx="2.5" fill="#282828"/><circle cx="128.0" cy="64.0" r="3.05" fill="none" stroke="#fff" stroke-width="2.1"/>
<rect x="137.2" y="57.0" width="13.5" height="14" rx="2.5" fill="#282828"/><path d="M140.3 60.3 L147.7 67.7 M140.3 67.7 L147.7 60.3" stroke="#fff" stroke-width="1.9" stroke-linecap="butt"/>
<rect x="214.2" y="73.0" width="13.5" height="14" rx="2.5" fill="#282828"/><circle cx="221.0" cy="80.0" r="3.05" fill="none" stroke="#fff" stroke-width="2.1"/>
<rect x="230.2" y="73.0" width="13.5" height="14" rx="2.5" fill="#282828"/><path d="M233.3 76.3 L240.7 83.7 M233.3 83.7 L240.7 76.3" stroke="#fff" stroke-width="1.9" stroke-linecap="butt"/>
<rect x="243.8" y="341.0" width="13.5" height="14" rx="2.5" fill="#282828"/><circle cx="250.5" cy="348.0" r="3.05" fill="none" stroke="#fff" stroke-width="2.1"/>
<rect x="259.8" y="341.0" width="13.5" height="14" rx="2.5" fill="#282828"/><path d="M262.8 344.3 L270.2 351.7 M262.8 351.7 L270.2 344.3" stroke="#fff" stroke-width="1.9" stroke-linecap="butt"/>
<rect x="151.2" y="528.0" width="13.5" height="14" rx="2.5" fill="#282828"/><circle cx="158.0" cy="535.0" r="3.05" fill="none" stroke="#fff" stroke-width="2.1"/>
<rect x="167.2" y="528.0" width="13.5" height="14" rx="2.5" fill="#282828"/><path d="M170.3 531.3 L177.7 538.7 M170.3 538.7 L177.7 531.3" stroke="#fff" stroke-width="1.9" stroke-linecap="butt"/>
</svg>
<div id="txt">
<div class="mon" style="left:62.3px">Okt</div>
<div class="mon" style="left:160.3px">Nov</div>
<div class="mon" style="left:249.3px">Dez</div>
<div class="mon" style="left:333.3px">Jan '15</div>
<div class="mon" style="left:426.3px">Feb</div>
<div class="mon" style="left:515.3px">Mär</div>
<div class="mon" style="left:613.3px">Apr</div>
<div class="mon" style="left:701.3px">Mai</div>
<div class="mon" style="left:786.3px">Jun</div>
<div class="mon" style="left:883.3px">Jul</div>
<div class="mon" style="left:985.3px">Aug</div>
<div class="mon" style="left:-32.5px">Sep</div>
<div class="yl" style="top:1.0px">130,000</div>
<div class="yl" style="top:43.0px">120,000</div>
<div class="yl" style="top:89.0px">110,000</div>
<div class="yl" style="top:139.0px">100,000</div>
<div class="yl" style="top:195.0px">90,000</div>
<div class="yl" style="top:257.0px">80,000</div>
<div class="yl" style="top:351.0px">4,000</div>
<div class="yl" style="top:394.0px">2,000</div>
<div class="yl" style="top:437.0px">0,000</div>
<div class="yl" style="top:481.0px">-2,000</div>
<div class="yl" style="top:552.0px">200,00</div>
<div class="yl" style="top:609.0px">0,00</div>
<div class="yl" style="top:666.0px">-200,00</div>
<svg class="abs" style="left:0;top:0" width="1405" height="712"><path d="M1400.5 217.5 L1346.5 217.5 L1338.5 225.5 L1346.5 233.5 L1400.5 233.5" fill="#333333" stroke="#e6e6e6" stroke-width="1"/></svg><div class="tagt" style="top:216.5px;left:1353.5px">86,330</div>
<svg class="abs" style="left:0;top:0" width="1405" height="712"><path d="M1400.5 582.5 L1352.5 582.5 L1345.5 590.5 L1352.5 598.5 L1400.5 598.5" fill="#333333" stroke="#8c8c8c" stroke-width="1"/></svg><div class="tagt" style="top:581.5px;left:1357.6px">100,00</div>
<svg class="abs" style="left:0;top:0" width="1405" height="712"><path d="M1400.5 638.5 L1352.5 638.5 L1345.5 646.5 L1352.5 654.5 L1400.5 654.5" fill="#333333" stroke="#8c8c8c" stroke-width="1"/></svg><div class="tagt" style="top:637.5px;left:1355.0px">-100,00</div>
<span class="lt" style="left:23.2px;top:8.0px;color:#cfcfcf">Bayerische Motoren Werke AG (Last, EUR)</span>
<span class="lt" style="left:261.3px;top:8.0px;color:#b4b4b4">O: 87,780</span>
<span class="lt" style="left:320.5px;top:8.0px;color:#b4b4b4">H: 87,780</span>
<span class="lt" style="left:379.3px;top:8.0px;color:#b4b4b4">L: 85,690</span>
<span class="lt" style="left:436.5px;top:8.0px;color:#b4b4b4">C: 86,330</span>
<span class="lt" style="left:23.2px;top:24.0px;color:#ececec;letter-spacing:0.10px">02.09.2014 - 12.08.2015 (1 Jahr, 1 Tag)</span>
<span class="lt" style="left:22.7px;top:40.0px;color:#0be41e;letter-spacing:-0.13px">SMA(5)</span>
<span class="lt" style="left:68.0px;top:40.0px;color:#0be41e;letter-spacing:0.20px">90,842</span>
<span class="lt" style="left:22.7px;top:56.0px;color:#fa0c0c;letter-spacing:-0.18px">SMA(20)</span>
<span class="lt" style="left:74.8px;top:56.0px;color:#fa0c0c;letter-spacing:0.20px">92,078</span>
<span class="lt" style="left:23.0px;top:72.0px;color:#fcd000">BB(20, 2)</span>
<span class="lt" style="left:79.8px;top:72.0px;color:#fcd000;letter-spacing:0.20px">97,060</span>
<span class="lt" style="left:123.8px;top:72.0px;color:#6c6390;letter-spacing:0.20px">92,078</span>
<span class="lt" style="left:167.8px;top:72.0px;color:#2f9fd0;letter-spacing:0.20px">87,095</span>
<span class="lt" style="left:22.2px;top:340.0px;color:#fcd000">MACD(12, 26, 9)</span>
<span class="lt" style="left:117.6px;top:340.0px;color:#fcd000;letter-spacing:0.15px">-1,793</span>
<span class="lt" style="left:158.6px;top:340.0px;color:#2f9fd0;letter-spacing:0.15px">-1,740</span>
<span class="lt" style="left:199.8px;top:340.0px;color:#6a60c8;letter-spacing:0.15px">-0,052</span>
<span class="lt" style="left:23.0px;top:527.0px;color:#fcd000">CCI(20, hlc3)</span>
<span class="lt" style="left:100.8px;top:527.0px;color:#fcd000;letter-spacing:0.20px">-178,37</span>
</div>
<div id="topbar"></div><div id="rightbar"></div><div id="topline"></div><div id="rightline"></div>
<div id="botbar"></div><div class="sb" style="left:176px;width:158px"></div><div class="sb" style="left:400px;width:58px"></div>
</body></html>
